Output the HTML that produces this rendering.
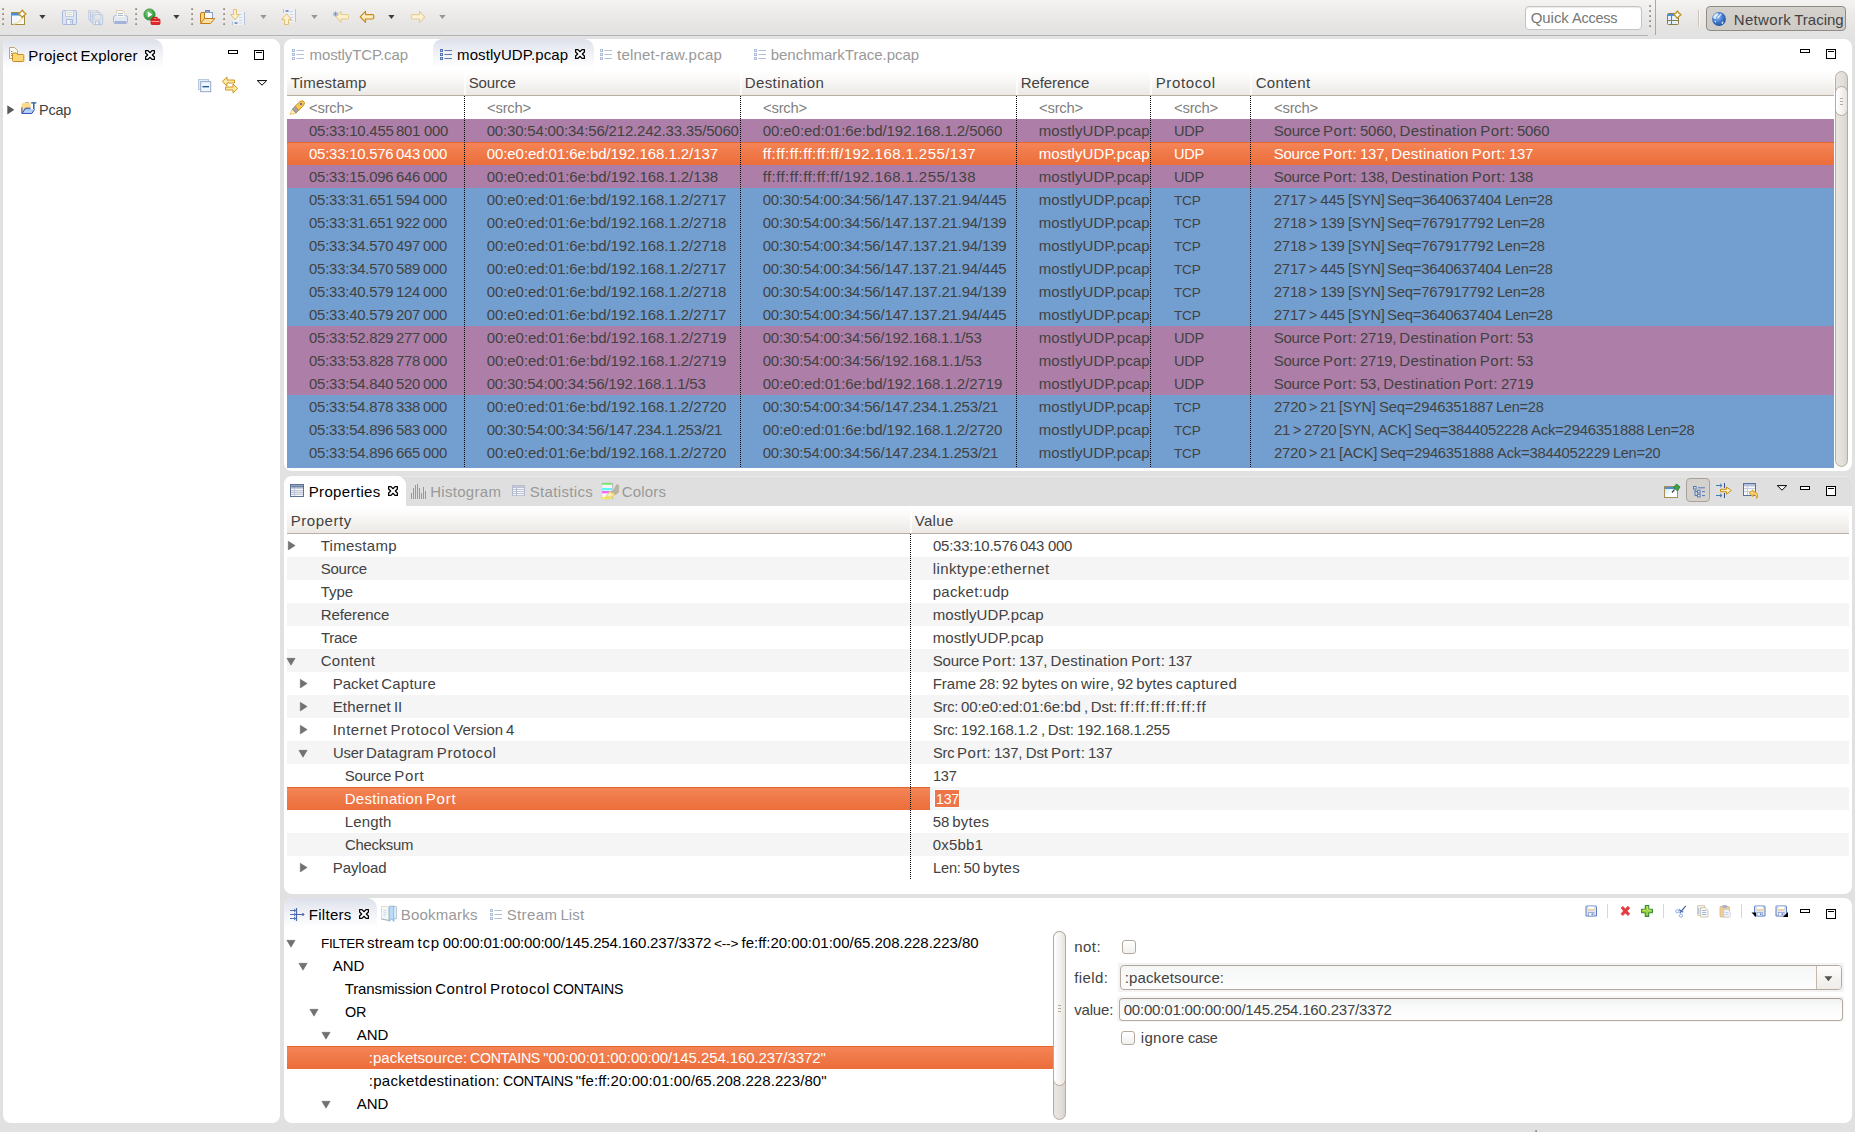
<!DOCTYPE html>
<html><head><meta charset="utf-8"><title>Network Tracing</title>
<style>
html,body{margin:0;padding:0}
body{width:1855px;height:1132px;overflow:hidden;background:#e1e1e1;font-family:"Liberation Sans", sans-serif;font-size:15px;position:relative}
div,span.t,svg{position:absolute;box-sizing:border-box}
span.t{white-space:pre;display:block}
span.w{position:absolute;top:0;white-space:pre;transform-origin:0 17px}
.panel{background:#fff;border-radius:8px}
.hdr{background:linear-gradient(#ffffff 0%,#fbfaf9 30%,#ece9e5 100%);border-bottom:1px solid #b9afa5}
.sel{background:linear-gradient(#e0672f 0,#e0672f 1px,#f58456 1px,#f07a4a 45%,#ec6e3a 100%)}
</style></head>
<body>
<div  style="left:0px;top:0px;width:1855px;height:39px;background:linear-gradient(#f4f3f1 0px,#ecebe9 14px,#e5e4e3 28px,#e3e3e3 35px,#e1e1e1 39px)"></div>
<div  style="left:0px;top:35px;width:1648px;height:1px;background:#b1b1b1"></div>
<div  style="left:0px;top:36px;width:1648px;height:1px;background:#e5e5e5"></div>
<div  style="left:1655px;top:0px;width:1px;height:35px;background:#aaa9a8"></div>
<div  style="left:1.5px;top:8px;width:2px;height:2px;background:linear-gradient(135deg,#c9c3b8,#857c68)"></div>
<div  style="left:1.5px;top:13px;width:2px;height:2px;background:linear-gradient(135deg,#c9c3b8,#857c68)"></div>
<div  style="left:1.5px;top:18px;width:2px;height:2px;background:linear-gradient(135deg,#c9c3b8,#857c68)"></div>
<div  style="left:1.5px;top:23px;width:2px;height:2px;background:linear-gradient(135deg,#c9c3b8,#857c68)"></div>
<svg style="left:10px;top:8px;" width="18" height="18" viewBox="0 0 18 18"><rect x="1.5" y="4.5" width="13" height="12" fill="#f3f8fd" stroke="#a58a3f"/><rect x="2" y="5" width="12" height="2.5" fill="#3e8fd8"/><path d="M3 16 Q11 15 13.5 7.5" stroke="#f4e3a7" stroke-width="1.6" fill="none"/><path d="M12.3 2.1999999999999997 Q13.65 4.449999999999999 15.9 5.8 Q13.65 7.15 12.3 9.4 Q10.950000000000001 7.15 8.700000000000001 5.8 Q10.950000000000001 4.449999999999999 12.3 2.1999999999999997 Z" fill="#fffdf0" stroke="#bf962a" stroke-width="1.5" stroke-linejoin="round"/><path d="M12.3 3.8 V7.8 M10.3 5.8 H14.3" stroke="#fff" stroke-width="1.2"/></svg>
<svg style="left:39px;top:15px;" width="7" height="5" viewBox="0 0 7 5"><path d="M0.3 0 L6.5 0 L3.4 4.1 Z" fill="#3c3c3c"/></svg>
<svg style="left:62px;top:10px;" width="16" height="16" viewBox="0 0 16 16"><g transform="translate(0,0) scale(1.0)" opacity="1.0"><path d="M1.5 0.5 H13.5 Q14.5 0.5 14.5 1.5 V13.5 Q14.5 14.5 13.5 14.5 H1.5 Q0.5 14.5 0.5 13.5 V1.5 Q0.5 0.5 1.5 0.5 Z" fill="#dde4ef" stroke="#a9bad8"/><rect x="3.5" y="0.5" width="8" height="6" fill="#f4f3ee" stroke="#c3cddf"/><path d="M5 2.5 H10 M5 4.5 H10" stroke="#d2d6dd" stroke-width="0.8"/><rect x="4.5" y="9.5" width="6" height="5" fill="#eef1f6" stroke="#a9bad8"/><rect x="8" y="10.5" width="1.5" height="3" fill="#b8c6df"/></g></svg>
<svg style="left:88px;top:10px;" width="16" height="16" viewBox="0 0 16 16"><g transform="translate(0,0) scale(0.7)" opacity="0.8"><path d="M1.5 0.5 H13.5 Q14.5 0.5 14.5 1.5 V13.5 Q14.5 14.5 13.5 14.5 H1.5 Q0.5 14.5 0.5 13.5 V1.5 Q0.5 0.5 1.5 0.5 Z" fill="#dde4ef" stroke="#a9bad8"/><rect x="3.5" y="0.5" width="8" height="6" fill="#f4f3ee" stroke="#c3cddf"/><path d="M5 2.5 H10 M5 4.5 H10" stroke="#d2d6dd" stroke-width="0.8"/><rect x="4.5" y="9.5" width="6" height="5" fill="#eef1f6" stroke="#a9bad8"/><rect x="8" y="10.5" width="1.5" height="3" fill="#b8c6df"/></g><g transform="translate(2.2,2.2) scale(0.7)" opacity="0.9"><path d="M1.5 0.5 H13.5 Q14.5 0.5 14.5 1.5 V13.5 Q14.5 14.5 13.5 14.5 H1.5 Q0.5 14.5 0.5 13.5 V1.5 Q0.5 0.5 1.5 0.5 Z" fill="#dde4ef" stroke="#a9bad8"/><rect x="3.5" y="0.5" width="8" height="6" fill="#f4f3ee" stroke="#c3cddf"/><path d="M5 2.5 H10 M5 4.5 H10" stroke="#d2d6dd" stroke-width="0.8"/><rect x="4.5" y="9.5" width="6" height="5" fill="#eef1f6" stroke="#a9bad8"/><rect x="8" y="10.5" width="1.5" height="3" fill="#b8c6df"/></g><g transform="translate(4.5,4.5) scale(0.7)" opacity="1.0"><path d="M1.5 0.5 H13.5 Q14.5 0.5 14.5 1.5 V13.5 Q14.5 14.5 13.5 14.5 H1.5 Q0.5 14.5 0.5 13.5 V1.5 Q0.5 0.5 1.5 0.5 Z" fill="#dde4ef" stroke="#a9bad8"/><rect x="3.5" y="0.5" width="8" height="6" fill="#f4f3ee" stroke="#c3cddf"/><path d="M5 2.5 H10 M5 4.5 H10" stroke="#d2d6dd" stroke-width="0.8"/><rect x="4.5" y="9.5" width="6" height="5" fill="#eef1f6" stroke="#a9bad8"/><rect x="8" y="10.5" width="1.5" height="3" fill="#b8c6df"/></g></svg>
<svg style="left:113px;top:10px;" width="16" height="16" viewBox="0 0 16 16"><path d="M3.5 6.5 V0.5 H9.5 L11.5 2.5 V6.5" fill="#fbf8ef" stroke="#dccfa8"/><rect x="0.5" y="5.5" width="14" height="8" rx="2" fill="#e3e9f3" stroke="#a9bad8"/><rect x="3.5" y="3" width="8" height="4" fill="#fbf8ef"/><path d="M5 3.5 H10 M5 5.5 H10" stroke="#a9bad8"/><rect x="1.5" y="11" width="12" height="3" rx="1" fill="#a3b4d6"/></svg>
<div  style="left:135px;top:8px;width:2px;height:2px;background:linear-gradient(135deg,#c9c3b8,#857c68)"></div>
<div  style="left:135px;top:13px;width:2px;height:2px;background:linear-gradient(135deg,#c9c3b8,#857c68)"></div>
<div  style="left:135px;top:18px;width:2px;height:2px;background:linear-gradient(135deg,#c9c3b8,#857c68)"></div>
<div  style="left:135px;top:23px;width:2px;height:2px;background:linear-gradient(135deg,#c9c3b8,#857c68)"></div>
<svg style="left:143px;top:8px;" width="18" height="18" viewBox="0 0 18 18"><defs><radialGradient id="gr" cx="40%" cy="35%" r="70%"><stop offset="0" stop-color="#7fd07a"/><stop offset="1" stop-color="#1d8a2c"/></radialGradient></defs><circle cx="6.5" cy="6.5" r="5.6" fill="url(#gr)" stroke="#2f8f3a" stroke-width="0.8"/><path d="M4.8 3.5 L9.6 6.5 L4.8 9.5 Z" fill="#fff"/><rect x="10" y="9.5" width="4" height="2.5" fill="none" stroke="#d91a1f" stroke-width="1.2"/><rect x="8" y="11" width="9" height="5.5" rx="1" fill="#e3262b" stroke="#c4161b" stroke-width="0.8"/><path d="M8.5 13.5 H16.5" stroke="#f7a9a9" stroke-width="0.9"/></svg>
<svg style="left:173px;top:15px;" width="7" height="5" viewBox="0 0 7 5"><path d="M0.3 0 L6.5 0 L3.4 4.1 Z" fill="#3c3c3c"/></svg>
<div  style="left:191px;top:8px;width:2px;height:2px;background:linear-gradient(135deg,#c9c3b8,#857c68)"></div>
<div  style="left:191px;top:13px;width:2px;height:2px;background:linear-gradient(135deg,#c9c3b8,#857c68)"></div>
<div  style="left:191px;top:18px;width:2px;height:2px;background:linear-gradient(135deg,#c9c3b8,#857c68)"></div>
<div  style="left:191px;top:23px;width:2px;height:2px;background:linear-gradient(135deg,#c9c3b8,#857c68)"></div>
<svg style="left:199px;top:9px;" width="18" height="16" viewBox="0 0 18 16"><rect x="6.5" y="1.5" width="4" height="2" fill="#8aa0c8" stroke="#6f86b4"/><rect x="5.5" y="3.5" width="8" height="6" fill="#f7f9fd" stroke="#8ea2c8"/><path d="M1.5 13.5 V5 Q1.5 3.5 3 3.5 H5.5 V9.5 H13.5" fill="#f7d48a" stroke="#c27c17"/><path d="M1.5 14.5 L5.5 9.5 H15.8 L11.5 14.5 Z" fill="#fbe0a1" stroke="#c27c17" stroke-linejoin="round"/></svg>
<div  style="left:222.5px;top:8px;width:2px;height:2px;background:linear-gradient(135deg,#c9c3b8,#857c68)"></div>
<div  style="left:222.5px;top:13px;width:2px;height:2px;background:linear-gradient(135deg,#c9c3b8,#857c68)"></div>
<div  style="left:222.5px;top:18px;width:2px;height:2px;background:linear-gradient(135deg,#c9c3b8,#857c68)"></div>
<div  style="left:222.5px;top:23px;width:2px;height:2px;background:linear-gradient(135deg,#c9c3b8,#857c68)"></div>
<svg style="left:230px;top:8px;" width="17" height="18" viewBox="0 0 17 18"><rect x="3" y="4" width="11.5" height="13" fill="#eef1f6"/><path d="M14.5 4 V17" stroke="#b6c4dd"/><path d="M2.5 13.5 V17" stroke="#b6c4dd"/><path d="M8 6.5 H12 M9 9.5 H12 M9 12.5 H12 M9 15 H12" stroke="#cfd8e8"/><rect x="4.5" y="14" width="3" height="2" fill="#7e9bd0"/><path d="M3.5 1.5 H6.5 V6.5 H9.3 L5 12 L0.7 6.5 H3.5 Z" fill="#fdf0cc" stroke="#e0c079" stroke-linejoin="round"/></svg>
<svg style="left:260px;top:15px;" width="7" height="5" viewBox="0 0 7 5"><path d="M0.3 0 L6.5 0 L3.4 4.1 Z" fill="#9d9389"/></svg>
<svg style="left:281px;top:8px;" width="17" height="18" viewBox="0 0 17 18"><rect x="3" y="1" width="11.5" height="13" fill="#eef1f6"/><path d="M14.5 1 V14" stroke="#b6c4dd"/><path d="M2.5 1 V5" stroke="#b6c4dd"/><path d="M8 3.5 H12 M9 6.5 H12 M9 9.5 H12 M9 12.5 H12" stroke="#cfd8e8"/><rect x="4.5" y="2" width="3" height="2" fill="#7e9bd0"/><path d="M3.5 16.5 H7.5 V11.5 H10.3 L5.5 5.5 L0.7 11.5 H3.5 Z" fill="#fdf0cc" stroke="#e0c079" stroke-linejoin="round"/></svg>
<svg style="left:311px;top:15px;" width="7" height="5" viewBox="0 0 7 5"><path d="M0.3 0 L6.5 0 L3.4 4.1 Z" fill="#9d9389"/></svg>
<svg style="left:332px;top:10px;" width="18" height="14" viewBox="0 0 18 14"><path d="M8.5 6.8 L13 2 V4.8 H16 Q17 4.8 17 5.8 V7.8 Q17 8.8 16 8.8 H13 V11.8 Z" transform="translate(21,0) scale(-1,1)" fill="none"/><path d="M4.2 6.8 L9 1.5 V4.6 H15.5 Q16.6 4.6 16.6 5.6 V8 Q16.6 9 15.5 9 H9 V12.2 Z" fill="#fdf0cc" stroke="#e3c88a" stroke-linejoin="round"/><path d="M3.5 1.5 V6.5 M1 4 H6 M1.7 2.2 L5.3 5.8 M5.3 2.2 L1.7 5.8" stroke="#6f8fc8" stroke-width="0.8"/></svg>
<svg style="left:359px;top:10px;" width="16" height="14" viewBox="0 0 16 14"><defs><linearGradient id="ba" x1="0" y1="0" x2="0" y2="1"><stop offset="0" stop-color="#fffdf5"/><stop offset="1" stop-color="#fbdc8b"/></linearGradient></defs><path d="M1.2 6.8 L6.5 1.3 V4.6 H13.5 Q14.7 4.6 14.7 5.8 V7.8 Q14.7 9 13.5 9 H6.5 V12.3 Z" fill="url(#ba)" stroke="#c58c18" stroke-width="1.2" stroke-linejoin="round"/></svg>
<svg style="left:388px;top:15px;" width="7" height="5" viewBox="0 0 7 5"><path d="M0.3 0 L6.5 0 L3.4 4.1 Z" fill="#3c3c3c"/></svg>
<svg style="left:410px;top:10px;" width="16" height="14" viewBox="0 0 16 14"><path d="M14.8 6.8 L9.5 1.3 V4.6 H2.5 Q1.3 4.6 1.3 5.8 V7.8 Q1.3 9 2.5 9 H9.5 V12.3 Z" fill="#fdf3d8" stroke="#e6cd95" stroke-width="1.1" stroke-linejoin="round"/></svg>
<svg style="left:439px;top:15px;" width="7" height="5" viewBox="0 0 7 5"><path d="M0.3 0 L6.5 0 L3.4 4.1 Z" fill="#9d9389"/></svg>
<div  style="left:1525px;top:6px;width:117px;height:24px;background:#fff;border:1px solid #c3c3c3;border-radius:4px;box-shadow:inset 0 1px 1px #e8e8e8"></div>
<span class="t" style="left:1530.7px;top:6px;color:#777;line-height:23px;height:23px;"><span class="w" style="left:0.00px;letter-spacing:-0.049px;">Quick</span> <span class="w" style="left:41.19px;transform:scale(0.9650);letter-spacing:-0.235px;">Access</span></span>
<div  style="left:1649px;top:5px;width:2px;height:2px;background:linear-gradient(135deg,#c9c3b8,#857c68)"></div>
<div  style="left:1649px;top:10px;width:2px;height:2px;background:linear-gradient(135deg,#c9c3b8,#857c68)"></div>
<div  style="left:1649px;top:15px;width:2px;height:2px;background:linear-gradient(135deg,#c9c3b8,#857c68)"></div>
<div  style="left:1649px;top:20px;width:2px;height:2px;background:linear-gradient(135deg,#c9c3b8,#857c68)"></div>
<div  style="left:1649px;top:25px;width:2px;height:2px;background:linear-gradient(135deg,#c9c3b8,#857c68)"></div>
<svg style="left:1666px;top:9px;" width="18" height="17" viewBox="0 0 18 17"><rect x="1.5" y="4.5" width="11" height="11" rx="1" fill="#e3f0fc" stroke="#8a7b4c"/><rect x="2" y="5" width="10" height="2" fill="#4b91da"/><path d="M5.5 7 V15 M2 11.5 H12.5" stroke="#8a7b4c" stroke-width="1"/><path d="M11.4 2.1 Q12.75 4.35 15.0 5.7 Q12.75 7.050000000000001 11.4 9.3 Q10.05 7.050000000000001 7.800000000000001 5.7 Q10.05 4.35 11.4 2.1 Z" fill="#fffdf0" stroke="#bf962a" stroke-width="1.5" stroke-linejoin="round"/><path d="M11.4 3.7 V7.7 M9.4 5.7 H13.4" stroke="#fff" stroke-width="1.2"/></svg>
<div  style="left:1698px;top:10px;width:1px;height:17px;background:#cdc3b9"></div>
<div  style="left:1699px;top:10px;width:1px;height:17px;background:#f6f5f4"></div>
<div  style="left:1706px;top:6px;width:140px;height:25px;background:linear-gradient(#d4d1cd,#cfccc8);border:1px solid #8f8b86;border-radius:4px"></div>
<svg style="left:1711px;top:11px;" width="16" height="16" viewBox="0 0 16 16"><defs><radialGradient id="gl" cx="40%" cy="35%" r="70%"><stop offset="0" stop-color="#9cc3f2"/><stop offset="0.55" stop-color="#3f78c8"/><stop offset="1" stop-color="#1f4f9e"/></radialGradient></defs><circle cx="8" cy="8" r="6.9" fill="url(#gl)"/><path d="M2.2 5.5 Q3.5 2.5 6 2 L7.8 3.2 L5.2 5.6 L4.6 8.2 L2.6 7.6 Z" fill="#eaf2fd" opacity="0.9"/><path d="M6.2 6.6 L9.8 2.4 L10.8 3 L7.4 7.4 Z" fill="#f4f8ff" opacity="0.85"/><path d="M3 9.5 L5.2 10.2 L4.6 12 Z M10.5 11 L12.6 10.6 L12 12.8 L10.8 13 Z" fill="#eef4fe" opacity="0.9"/></svg>
<span class="t" style="left:1733.7px;top:8px;color:#424242;line-height:23px;height:23px;"><span class="w" style="left:0.00px;letter-spacing:0.358px;">Network</span> <span class="w" style="left:60.55px;">Tracing</span></span>
<div class="panel" style="left:3px;top:39px;width:277px;height:1084px;"></div>
<div class="panel" style="left:284px;top:39px;width:1568px;height:432px;"></div>
<div class="panel" style="left:284px;top:476px;width:1568px;height:418px;overflow:hidden"></div>
<div class="panel" style="left:284px;top:898px;width:1568px;height:225px;"></div>
<div  style="left:1535px;top:1130px;width:2px;height:2px;background:linear-gradient(135deg,#c9c3b8,#857c68)"></div>
<div  style="left:3px;top:39px;width:160px;height:30px;background:linear-gradient(#dde0ea 0px,#e6e8f0 6px,#f4f5f9 18px,#ffffff 100%);border-radius:8px 10px 0 0"></div>
<svg style="left:8px;top:46px;" width="17" height="16" viewBox="0 0 17 16"><path d="M1.5 1.5 H6.5 L9.5 4.5 V12.5 H1.5 Z" fill="#fbf9f0" stroke="#b8a878"/><path d="M3 5.5 H4.5 M3 7.5 H4.5 M3 9.5 H4.5" stroke="#6f8cc8"/><path d="M5.5 15.5 Q4.5 15.5 4.5 14.5 V8 Q4.5 7 5.5 7 H8.3 L9.5 8.5 H14.8 Q15.8 8.5 15.8 9.5 V14.5 Q15.8 15.5 14.8 15.5 Z" fill="#fbd873" stroke="#c78a24"/></svg>
<span class="t" style="left:28.2px;top:44px;color:#000;line-height:23px;height:23px;"><span class="w" style="left:0.00px;letter-spacing:0.362px;">Project</span> <span class="w" style="left:52.24px;letter-spacing:0.175px;">Explorer</span></span>
<svg style="left:144px;top:49px;" width="12" height="12" viewBox="0 0 12 12"><path d="M1.6 1.6 H4 L6 3.7 L8 1.6 H10.4 V4 L8.3 6 L10.4 8 V10.4 H8 L6 8.3 L4 10.4 H1.6 V8 L3.7 6 L1.6 4 Z" fill="#fff" stroke="#000" stroke-width="1.25" stroke-linejoin="round"/></svg>
<div  style="left:228px;top:50px;width:10px;height:4px;border:1px solid #000;background:#fff"></div>
<div  style="left:254px;top:50px;width:10px;height:10px;border:1px solid #000;background:#fff"></div>
<div  style="left:256px;top:52px;width:6px;height:1px;background:#000"></div>
<svg style="left:198px;top:79px;" width="14" height="14" viewBox="0 0 14 14"><rect x="0.5" y="0.5" width="10" height="10" fill="#dcecf9" stroke="#b9c8df"/><rect x="2.7" y="2.7" width="10" height="10" fill="#eef7fd" stroke="#95a4c5"/><path d="M4.5 7.7 H11" stroke="#1b4f90" stroke-width="1.3"/></svg>
<svg style="left:221px;top:76px;" width="18" height="18" viewBox="0 0 18 18"><path d="M1.2 5.5 L6 1 V4 H13.5 V7 H6 V10 Z" fill="#fde9a3" stroke="#c98d13" stroke-width="0.9" stroke-linejoin="round"/><path d="M16.8 12.5 L12 8 V11 H4.5 V14 H12 V17 Z" fill="#fde9a3" stroke="#c98d13" stroke-width="0.9" stroke-linejoin="round"/></svg>
<svg style="left:256px;top:80px;" width="12" height="7" viewBox="0 0 12 7"><path d="M1.3 0.6 H10.7 L6 5.2 Z" fill="#fff" stroke="#000" stroke-width="1"/></svg>
<svg style="left:7px;top:105px;" width="8" height="10" viewBox="0 0 8 10"><path d="M0.3 0.2 L7.3 4.8 L0.3 9.4 Z" fill="#595959"/></svg>
<svg style="left:21px;top:102px;" width="16" height="13" viewBox="0 0 16 13"><defs><linearGradient id="pf" x1="0" y1="0" x2="0" y2="1"><stop offset="0" stop-color="#8fbaf0"/><stop offset="1" stop-color="#c9e0fa"/></linearGradient></defs><path d="M1 11 V2.4 Q1 1.4 2 1.4 H3.2 L4.3 0.4 H7.6 L8.7 1.4 H10.2 V6" fill="#fcdb88" stroke="#f0cf84" stroke-width="0.6"/><path d="M4.3 0.5 H7.6" stroke="#a3abbd" stroke-width="1"/><path d="M1.2 11.4 L4.4 6.2 H14.4 L10.9 11.4 Z" fill="url(#pf)" stroke="#3142b4" stroke-width="1" stroke-linejoin="round"/><path d="M0.9 5.5 V11.6" stroke="#3142b4" stroke-width="1"/><rect x="9.6" y="0" width="6.4" height="7.4" fill="#fff"/><path d="M10.2 0.9 H15.4 M12.8 0.9 V7" stroke="#1d5a9a" stroke-width="1.4"/></svg>
<span class="t" style="left:39.0px;top:98px;color:#424242;line-height:23px;height:23px;"><span class="w" style="left:0.00px;transform:scale(0.9637);letter-spacing:-0.249px;">Pcap</span></span>
<div  style="left:433px;top:39px;width:161px;height:29px;background:linear-gradient(#dde0ea 0px,#e6e8f0 6px,#f4f5f9 18px,#ffffff 100%);border-radius:9px 10px 0 0"></div>
<svg style="left:292px;top:49px;" width="12" height="11" viewBox="0 0 12 11"><g opacity="0.45"><rect x="0" y="0" width="3" height="3" fill="#4c6aa8"/><rect x="0" y="4" width="3" height="3" fill="#4c6aa8"/><rect x="0" y="8" width="3" height="3" fill="#4c6aa8"/><rect x="0.9" y="0.9" width="1.2" height="1.2" fill="#dfe6f3"/><rect x="0.9" y="4.9" width="1.2" height="1.2" fill="#dfe6f3"/><rect x="0.9" y="8.9" width="1.2" height="1.2" fill="#dfe6f3"/><path d="M4.5 1.5 H12 M4.5 5.5 H12 M4.5 9.5 H12" stroke="#5d78b0" stroke-width="1"/></g></svg>
<span class="t" style="left:309.5px;top:43px;color:#999999;line-height:23px;height:23px;"><span class="w" style="left:0.00px;letter-spacing:-0.097px;">mostlyTCP.cap</span></span>
<svg style="left:440px;top:49px;" width="12" height="11" viewBox="0 0 12 11"><g opacity="1.0"><rect x="0" y="0" width="3" height="3" fill="#4c6aa8"/><rect x="0" y="4" width="3" height="3" fill="#4c6aa8"/><rect x="0" y="8" width="3" height="3" fill="#4c6aa8"/><rect x="0.9" y="0.9" width="1.2" height="1.2" fill="#dfe6f3"/><rect x="0.9" y="4.9" width="1.2" height="1.2" fill="#dfe6f3"/><rect x="0.9" y="8.9" width="1.2" height="1.2" fill="#dfe6f3"/><path d="M4.5 1.5 H12 M4.5 5.5 H12 M4.5 9.5 H12" stroke="#5d78b0" stroke-width="1"/></g></svg>
<span class="t" style="left:457.1px;top:43px;color:#000;line-height:23px;height:23px;"><span class="w" style="left:0.00px;letter-spacing:0.087px;">mostlyUDP.pcap</span></span>
<svg style="left:574px;top:48.3px;" width="12" height="12" viewBox="0 0 12 12"><path d="M1.6 1.6 H4 L6 3.7 L8 1.6 H10.4 V4 L8.3 6 L10.4 8 V10.4 H8 L6 8.3 L4 10.4 H1.6 V8 L3.7 6 L1.6 4 Z" fill="#fff" stroke="#000" stroke-width="1.25" stroke-linejoin="round"/></svg>
<svg style="left:600px;top:49px;" width="12" height="11" viewBox="0 0 12 11"><g opacity="0.45"><rect x="0" y="0" width="3" height="3" fill="#4c6aa8"/><rect x="0" y="4" width="3" height="3" fill="#4c6aa8"/><rect x="0" y="8" width="3" height="3" fill="#4c6aa8"/><rect x="0.9" y="0.9" width="1.2" height="1.2" fill="#dfe6f3"/><rect x="0.9" y="4.9" width="1.2" height="1.2" fill="#dfe6f3"/><rect x="0.9" y="8.9" width="1.2" height="1.2" fill="#dfe6f3"/><path d="M4.5 1.5 H12 M4.5 5.5 H12 M4.5 9.5 H12" stroke="#5d78b0" stroke-width="1"/></g></svg>
<span class="t" style="left:617.0px;top:43px;color:#999999;line-height:23px;height:23px;"><span class="w" style="left:0.00px;letter-spacing:0.218px;">telnet-raw.pcap</span></span>
<svg style="left:754px;top:49px;" width="12" height="11" viewBox="0 0 12 11"><g opacity="0.45"><rect x="0" y="0" width="3" height="3" fill="#4c6aa8"/><rect x="0" y="4" width="3" height="3" fill="#4c6aa8"/><rect x="0" y="8" width="3" height="3" fill="#4c6aa8"/><rect x="0.9" y="0.9" width="1.2" height="1.2" fill="#dfe6f3"/><rect x="0.9" y="4.9" width="1.2" height="1.2" fill="#dfe6f3"/><rect x="0.9" y="8.9" width="1.2" height="1.2" fill="#dfe6f3"/><path d="M4.5 1.5 H12 M4.5 5.5 H12 M4.5 9.5 H12" stroke="#5d78b0" stroke-width="1"/></g></svg>
<span class="t" style="left:770.7px;top:43px;color:#999999;line-height:23px;height:23px;"><span class="w" style="left:0.00px;letter-spacing:-0.010px;">benchmarkTrace.pcap</span></span>
<svg style="left:289px;top:100px;" width="17" height="16" viewBox="0 0 17 16"><path d="M1 14.5 L3.2 9.5 L7 13 Z" fill="#fdf2c0" stroke="#e5b84a" stroke-width="0.8"/><path d="M3.5 9.2 L6 6.5 L9.7 10.2 L7.2 12.8 Z" fill="#a9a5a8" stroke="#6e6a6e" stroke-width="0.8"/><path d="M6 6.3 L11.2 1.3 L14 0.8 L15.5 2.6 L14.8 5.2 L9.9 10.3 Z" fill="#f8c657" stroke="#c98814" stroke-width="0.9" stroke-linejoin="round"/><circle cx="12" cy="4" r="1.1" fill="#3b5ea8"/></svg>
<div class="hdr" style="left:287px;top:71px;width:1547px;height:25px;"></div>
<span class="t" style="left:290.7px;top:71px;color:#424242;line-height:23px;height:23px;"><span class="w" style="left:0.00px;letter-spacing:0.264px;">Timestamp</span></span>
<span class="t" style="left:468.7px;top:71px;color:#424242;line-height:23px;height:23px;"><span class="w" style="left:0.00px;letter-spacing:-0.089px;">Source</span></span>
<div  style="left:464px;top:71px;width:2px;height:24px;background:rgba(255,255,255,0.72)"></div>
<span class="t" style="left:744.7px;top:71px;color:#424242;line-height:23px;height:23px;"><span class="w" style="left:0.00px;letter-spacing:0.405px;">Destination</span></span>
<div  style="left:740px;top:71px;width:2px;height:24px;background:rgba(255,255,255,0.72)"></div>
<span class="t" style="left:1020.7px;top:71px;color:#424242;line-height:23px;height:23px;"><span class="w" style="left:0.00px;letter-spacing:-0.080px;">Reference</span></span>
<div  style="left:1016px;top:71px;width:2px;height:24px;background:rgba(255,255,255,0.72)"></div>
<span class="t" style="left:1155.7px;top:71px;color:#424242;line-height:23px;height:23px;"><span class="w" style="left:0.00px;letter-spacing:0.621px;">Protocol</span></span>
<div  style="left:1150px;top:71px;width:2px;height:24px;background:rgba(255,255,255,0.72)"></div>
<span class="t" style="left:1255.7px;top:71px;color:#424242;line-height:23px;height:23px;"><span class="w" style="left:0.00px;letter-spacing:0.308px;">Content</span></span>
<div  style="left:1250px;top:71px;width:2px;height:24px;background:rgba(255,255,255,0.72)"></div>
<span class="t" style="left:308.7px;top:96px;color:#7f7f7f;line-height:23px;height:23px;"><span class="w" style="left:0.00px;transform:scale(0.9882);letter-spacing:-0.223px;">&lt;srch&gt;</span></span>
<span class="t" style="left:486.7px;top:96px;color:#7f7f7f;line-height:23px;height:23px;"><span class="w" style="left:0.00px;transform:scale(0.9882);letter-spacing:-0.223px;">&lt;srch&gt;</span></span>
<span class="t" style="left:762.7px;top:96px;color:#7f7f7f;line-height:23px;height:23px;"><span class="w" style="left:0.00px;transform:scale(0.9882);letter-spacing:-0.223px;">&lt;srch&gt;</span></span>
<span class="t" style="left:1038.7px;top:96px;color:#7f7f7f;line-height:23px;height:23px;"><span class="w" style="left:0.00px;transform:scale(0.9882);letter-spacing:-0.223px;">&lt;srch&gt;</span></span>
<span class="t" style="left:1173.7px;top:96px;color:#7f7f7f;line-height:23px;height:23px;"><span class="w" style="left:0.00px;transform:scale(0.9882);letter-spacing:-0.223px;">&lt;srch&gt;</span></span>
<span class="t" style="left:1273.7px;top:96px;color:#7f7f7f;line-height:23px;height:23px;"><span class="w" style="left:0.00px;transform:scale(0.9882);letter-spacing:-0.223px;">&lt;srch&gt;</span></span>
<div  style="left:287px;top:119px;width:1547px;height:23px;background:#ad7fa8"></div>
<span class="t" style="left:308.7px;top:119px;color:#424242;line-height:23px;height:23px;"><span class="w" style="left:0.00px;transform:scale(0.9949);letter-spacing:-0.213px;">05:33:10.455</span> <span class="w" style="left:87.63px;transform:scale(0.9947);letter-spacing:-0.243px;">801</span> <span class="w" style="left:114.83px;transform:scale(0.9947);letter-spacing:-0.243px;">000</span></span>
<span class="t" style="left:486.7px;top:119px;color:#424242;line-height:23px;height:23px;"><span class="w" style="left:0.00px;letter-spacing:-0.180px;">00:30:54:00:34:56/212.242.33.35/5060</span></span>
<span class="t" style="left:762.7px;top:119px;color:#424242;line-height:23px;height:23px;"><span class="w" style="left:0.00px;letter-spacing:-0.067px;">00:e0:ed:01:6e:bd/192.168.1.2/5060</span></span>
<span class="t" style="left:1038.7px;top:119px;color:#424242;line-height:23px;height:23px;"><span class="w" style="left:0.00px;letter-spacing:0.087px;">mostlyUDP.pcap</span></span>
<span class="t" style="left:1173.7px;top:119px;color:#424242;line-height:23px;height:23px;"><span class="w" style="left:0.00px;transform:scale(0.9691);letter-spacing:-0.307px;">UDP</span></span>
<span class="t" style="left:1273.7px;top:119px;color:#424242;line-height:23px;height:23px;"><span class="w" style="left:0.00px;letter-spacing:-0.199px;">Source</span> <span class="w" style="left:49.36px;letter-spacing:0.512px;">Port:</span> <span class="w" style="left:86.63px;transform:scale(0.9948);letter-spacing:-0.219px;">5060,</span> <span class="w" style="left:125.91px;letter-spacing:0.229px;">Destination</span> <span class="w" style="left:206.50px;letter-spacing:0.512px;">Port:</span> <span class="w" style="left:243.77px;transform:scale(0.9948);letter-spacing:-0.243px;">5060</span></span>
<div class="sel" style="left:287px;top:142px;width:1547px;height:23px;"></div>
<span class="t" style="left:308.7px;top:142px;color:#ffffff;line-height:23px;height:23px;"><span class="w" style="left:0.00px;transform:scale(0.9927);letter-spacing:-0.213px;">05:33:10.576</span> <span class="w" style="left:87.43px;transform:scale(0.9925);letter-spacing:-0.243px;">043</span> <span class="w" style="left:114.57px;transform:scale(0.9925);letter-spacing:-0.243px;">000</span></span>
<span class="t" style="left:486.7px;top:142px;color:#ffffff;line-height:23px;height:23px;"><span class="w" style="left:0.00px;letter-spacing:-0.069px;">00:e0:ed:01:6e:bd/192.168.1.2/137</span></span>
<span class="t" style="left:762.7px;top:142px;color:#ffffff;line-height:23px;height:23px;"><span class="w" style="left:0.00px;letter-spacing:0.425px;">ff:ff:ff:ff:ff:ff/192.168.1.255/137</span></span>
<span class="t" style="left:1038.7px;top:142px;color:#ffffff;line-height:23px;height:23px;"><span class="w" style="left:0.00px;letter-spacing:0.087px;">mostlyUDP.pcap</span></span>
<span class="t" style="left:1173.7px;top:142px;color:#ffffff;line-height:23px;height:23px;"><span class="w" style="left:0.00px;transform:scale(0.9691);letter-spacing:-0.307px;">UDP</span></span>
<span class="t" style="left:1273.7px;top:142px;color:#ffffff;line-height:23px;height:23px;"><span class="w" style="left:0.00px;letter-spacing:-0.217px;">Source</span> <span class="w" style="left:49.25px;letter-spacing:0.497px;">Port:</span> <span class="w" style="left:86.43px;transform:scale(0.9925);letter-spacing:-0.213px;">137,</span> <span class="w" style="left:117.59px;letter-spacing:0.213px;">Destination</span> <span class="w" style="left:197.99px;letter-spacing:0.497px;">Port:</span> <span class="w" style="left:235.18px;transform:scale(0.9925);letter-spacing:-0.243px;">137</span></span>
<div  style="left:287px;top:165px;width:1547px;height:23px;background:#ad7fa8"></div>
<span class="t" style="left:308.7px;top:165px;color:#424242;line-height:23px;height:23px;"><span class="w" style="left:0.00px;transform:scale(0.9927);letter-spacing:-0.213px;">05:33:15.096</span> <span class="w" style="left:87.43px;transform:scale(0.9925);letter-spacing:-0.243px;">646</span> <span class="w" style="left:114.57px;transform:scale(0.9925);letter-spacing:-0.243px;">000</span></span>
<span class="t" style="left:486.7px;top:165px;color:#424242;line-height:23px;height:23px;"><span class="w" style="left:0.00px;letter-spacing:-0.069px;">00:e0:ed:01:6e:bd/192.168.1.2/138</span></span>
<span class="t" style="left:762.7px;top:165px;color:#424242;line-height:23px;height:23px;"><span class="w" style="left:0.00px;letter-spacing:0.425px;">ff:ff:ff:ff:ff:ff/192.168.1.255/138</span></span>
<span class="t" style="left:1038.7px;top:165px;color:#424242;line-height:23px;height:23px;"><span class="w" style="left:0.00px;letter-spacing:0.087px;">mostlyUDP.pcap</span></span>
<span class="t" style="left:1173.7px;top:165px;color:#424242;line-height:23px;height:23px;"><span class="w" style="left:0.00px;transform:scale(0.9691);letter-spacing:-0.307px;">UDP</span></span>
<span class="t" style="left:1273.7px;top:165px;color:#424242;line-height:23px;height:23px;"><span class="w" style="left:0.00px;letter-spacing:-0.217px;">Source</span> <span class="w" style="left:49.25px;letter-spacing:0.497px;">Port:</span> <span class="w" style="left:86.43px;transform:scale(0.9925);letter-spacing:-0.213px;">138,</span> <span class="w" style="left:117.59px;letter-spacing:0.213px;">Destination</span> <span class="w" style="left:197.99px;letter-spacing:0.497px;">Port:</span> <span class="w" style="left:235.18px;transform:scale(0.9925);letter-spacing:-0.243px;">138</span></span>
<div  style="left:287px;top:188px;width:1547px;height:23px;background:#729fcf"></div>
<span class="t" style="left:308.7px;top:188px;color:#424242;line-height:23px;height:23px;"><span class="w" style="left:0.00px;transform:scale(0.9927);letter-spacing:-0.213px;">05:33:31.651</span> <span class="w" style="left:87.43px;transform:scale(0.9925);letter-spacing:-0.243px;">594</span> <span class="w" style="left:114.57px;transform:scale(0.9925);letter-spacing:-0.243px;">000</span></span>
<span class="t" style="left:486.7px;top:188px;color:#424242;line-height:23px;height:23px;"><span class="w" style="left:0.00px;letter-spacing:-0.067px;">00:e0:ed:01:6e:bd/192.168.1.2/2717</span></span>
<span class="t" style="left:762.7px;top:188px;color:#424242;line-height:23px;height:23px;"><span class="w" style="left:0.00px;letter-spacing:-0.184px;">00:30:54:00:34:56/147.137.21.94/445</span></span>
<span class="t" style="left:1038.7px;top:188px;color:#424242;line-height:23px;height:23px;"><span class="w" style="left:0.00px;letter-spacing:0.087px;">mostlyUDP.pcap</span></span>
<span class="t" style="left:1173.7px;top:188px;color:#424242;line-height:23px;height:23px;"><span class="w" style="left:0.00px;transform:scale(0.9098);letter-spacing:-0.291px;">TCP</span></span>
<span class="t" style="left:1273.7px;top:188px;color:#424242;line-height:23px;height:23px;"><span class="w" style="left:0.00px;letter-spacing:-0.239px;">2717</span> <span class="w" style="left:35.46px;transform:scale(0.9523);letter-spacing:-0.255px;">&gt;</span> <span class="w" style="left:46.60px;letter-spacing:-0.239px;">445</span> <span class="w" style="left:73.96px;transform:scale(0.9586);letter-spacing:-0.228px;">[SYN]</span> <span class="w" style="left:113.47px;transform:scale(0.9919);letter-spacing:-0.247px;">Seq=3640637404</span> <span class="w" style="left:230.98px;transform:scale(0.9715);letter-spacing:-0.245px;">Len=28</span></span>
<div  style="left:287px;top:211px;width:1547px;height:23px;background:#729fcf"></div>
<span class="t" style="left:308.7px;top:211px;color:#424242;line-height:23px;height:23px;"><span class="w" style="left:0.00px;transform:scale(0.9927);letter-spacing:-0.213px;">05:33:31.651</span> <span class="w" style="left:87.43px;transform:scale(0.9925);letter-spacing:-0.243px;">922</span> <span class="w" style="left:114.57px;transform:scale(0.9925);letter-spacing:-0.243px;">000</span></span>
<span class="t" style="left:486.7px;top:211px;color:#424242;line-height:23px;height:23px;"><span class="w" style="left:0.00px;letter-spacing:-0.067px;">00:e0:ed:01:6e:bd/192.168.1.2/2718</span></span>
<span class="t" style="left:762.7px;top:211px;color:#424242;line-height:23px;height:23px;"><span class="w" style="left:0.00px;letter-spacing:-0.184px;">00:30:54:00:34:56/147.137.21.94/139</span></span>
<span class="t" style="left:1038.7px;top:211px;color:#424242;line-height:23px;height:23px;"><span class="w" style="left:0.00px;letter-spacing:0.087px;">mostlyUDP.pcap</span></span>
<span class="t" style="left:1173.7px;top:211px;color:#424242;line-height:23px;height:23px;"><span class="w" style="left:0.00px;transform:scale(0.9098);letter-spacing:-0.291px;">TCP</span></span>
<span class="t" style="left:1273.7px;top:211px;color:#424242;line-height:23px;height:23px;"><span class="w" style="left:0.00px;letter-spacing:-0.236px;">2718</span> <span class="w" style="left:35.47px;transform:scale(0.9527);letter-spacing:-0.255px;">&gt;</span> <span class="w" style="left:46.62px;letter-spacing:-0.236px;">139</span> <span class="w" style="left:73.98px;transform:scale(0.9590);letter-spacing:-0.228px;">[SYN]</span> <span class="w" style="left:113.51px;transform:scale(0.9916);letter-spacing:-0.248px;">Seq=767917792</span> <span class="w" style="left:222.97px;transform:scale(0.9718);letter-spacing:-0.245px;">Len=28</span></span>
<div  style="left:287px;top:234px;width:1547px;height:23px;background:#729fcf"></div>
<span class="t" style="left:308.7px;top:234px;color:#424242;line-height:23px;height:23px;"><span class="w" style="left:0.00px;transform:scale(0.9927);letter-spacing:-0.213px;">05:33:34.570</span> <span class="w" style="left:87.43px;transform:scale(0.9925);letter-spacing:-0.243px;">497</span> <span class="w" style="left:114.57px;transform:scale(0.9925);letter-spacing:-0.243px;">000</span></span>
<span class="t" style="left:486.7px;top:234px;color:#424242;line-height:23px;height:23px;"><span class="w" style="left:0.00px;letter-spacing:-0.067px;">00:e0:ed:01:6e:bd/192.168.1.2/2718</span></span>
<span class="t" style="left:762.7px;top:234px;color:#424242;line-height:23px;height:23px;"><span class="w" style="left:0.00px;letter-spacing:-0.184px;">00:30:54:00:34:56/147.137.21.94/139</span></span>
<span class="t" style="left:1038.7px;top:234px;color:#424242;line-height:23px;height:23px;"><span class="w" style="left:0.00px;letter-spacing:0.087px;">mostlyUDP.pcap</span></span>
<span class="t" style="left:1173.7px;top:234px;color:#424242;line-height:23px;height:23px;"><span class="w" style="left:0.00px;transform:scale(0.9098);letter-spacing:-0.291px;">TCP</span></span>
<span class="t" style="left:1273.7px;top:234px;color:#424242;line-height:23px;height:23px;"><span class="w" style="left:0.00px;letter-spacing:-0.236px;">2718</span> <span class="w" style="left:35.47px;transform:scale(0.9527);letter-spacing:-0.255px;">&gt;</span> <span class="w" style="left:46.62px;letter-spacing:-0.236px;">139</span> <span class="w" style="left:73.98px;transform:scale(0.9590);letter-spacing:-0.228px;">[SYN]</span> <span class="w" style="left:113.51px;transform:scale(0.9916);letter-spacing:-0.248px;">Seq=767917792</span> <span class="w" style="left:222.97px;transform:scale(0.9718);letter-spacing:-0.245px;">Len=28</span></span>
<div  style="left:287px;top:257px;width:1547px;height:23px;background:#729fcf"></div>
<span class="t" style="left:308.7px;top:257px;color:#424242;line-height:23px;height:23px;"><span class="w" style="left:0.00px;transform:scale(0.9927);letter-spacing:-0.213px;">05:33:34.570</span> <span class="w" style="left:87.43px;transform:scale(0.9925);letter-spacing:-0.243px;">589</span> <span class="w" style="left:114.57px;transform:scale(0.9925);letter-spacing:-0.243px;">000</span></span>
<span class="t" style="left:486.7px;top:257px;color:#424242;line-height:23px;height:23px;"><span class="w" style="left:0.00px;letter-spacing:-0.067px;">00:e0:ed:01:6e:bd/192.168.1.2/2717</span></span>
<span class="t" style="left:762.7px;top:257px;color:#424242;line-height:23px;height:23px;"><span class="w" style="left:0.00px;letter-spacing:-0.184px;">00:30:54:00:34:56/147.137.21.94/445</span></span>
<span class="t" style="left:1038.7px;top:257px;color:#424242;line-height:23px;height:23px;"><span class="w" style="left:0.00px;letter-spacing:0.087px;">mostlyUDP.pcap</span></span>
<span class="t" style="left:1173.7px;top:257px;color:#424242;line-height:23px;height:23px;"><span class="w" style="left:0.00px;transform:scale(0.9098);letter-spacing:-0.291px;">TCP</span></span>
<span class="t" style="left:1273.7px;top:257px;color:#424242;line-height:23px;height:23px;"><span class="w" style="left:0.00px;letter-spacing:-0.239px;">2717</span> <span class="w" style="left:35.46px;transform:scale(0.9523);letter-spacing:-0.255px;">&gt;</span> <span class="w" style="left:46.60px;letter-spacing:-0.239px;">445</span> <span class="w" style="left:73.96px;transform:scale(0.9586);letter-spacing:-0.228px;">[SYN]</span> <span class="w" style="left:113.47px;transform:scale(0.9919);letter-spacing:-0.247px;">Seq=3640637404</span> <span class="w" style="left:230.98px;transform:scale(0.9715);letter-spacing:-0.245px;">Len=28</span></span>
<div  style="left:287px;top:280px;width:1547px;height:23px;background:#729fcf"></div>
<span class="t" style="left:308.7px;top:280px;color:#424242;line-height:23px;height:23px;"><span class="w" style="left:0.00px;transform:scale(0.9927);letter-spacing:-0.213px;">05:33:40.579</span> <span class="w" style="left:87.43px;transform:scale(0.9925);letter-spacing:-0.243px;">124</span> <span class="w" style="left:114.57px;transform:scale(0.9925);letter-spacing:-0.243px;">000</span></span>
<span class="t" style="left:486.7px;top:280px;color:#424242;line-height:23px;height:23px;"><span class="w" style="left:0.00px;letter-spacing:-0.067px;">00:e0:ed:01:6e:bd/192.168.1.2/2718</span></span>
<span class="t" style="left:762.7px;top:280px;color:#424242;line-height:23px;height:23px;"><span class="w" style="left:0.00px;letter-spacing:-0.184px;">00:30:54:00:34:56/147.137.21.94/139</span></span>
<span class="t" style="left:1038.7px;top:280px;color:#424242;line-height:23px;height:23px;"><span class="w" style="left:0.00px;letter-spacing:0.087px;">mostlyUDP.pcap</span></span>
<span class="t" style="left:1173.7px;top:280px;color:#424242;line-height:23px;height:23px;"><span class="w" style="left:0.00px;transform:scale(0.9098);letter-spacing:-0.291px;">TCP</span></span>
<span class="t" style="left:1273.7px;top:280px;color:#424242;line-height:23px;height:23px;"><span class="w" style="left:0.00px;letter-spacing:-0.236px;">2718</span> <span class="w" style="left:35.47px;transform:scale(0.9527);letter-spacing:-0.255px;">&gt;</span> <span class="w" style="left:46.62px;letter-spacing:-0.236px;">139</span> <span class="w" style="left:73.98px;transform:scale(0.9590);letter-spacing:-0.228px;">[SYN]</span> <span class="w" style="left:113.51px;transform:scale(0.9916);letter-spacing:-0.248px;">Seq=767917792</span> <span class="w" style="left:222.97px;transform:scale(0.9718);letter-spacing:-0.245px;">Len=28</span></span>
<div  style="left:287px;top:303px;width:1547px;height:23px;background:#729fcf"></div>
<span class="t" style="left:308.7px;top:303px;color:#424242;line-height:23px;height:23px;"><span class="w" style="left:0.00px;transform:scale(0.9927);letter-spacing:-0.213px;">05:33:40.579</span> <span class="w" style="left:87.43px;transform:scale(0.9925);letter-spacing:-0.243px;">207</span> <span class="w" style="left:114.57px;transform:scale(0.9925);letter-spacing:-0.243px;">000</span></span>
<span class="t" style="left:486.7px;top:303px;color:#424242;line-height:23px;height:23px;"><span class="w" style="left:0.00px;letter-spacing:-0.067px;">00:e0:ed:01:6e:bd/192.168.1.2/2717</span></span>
<span class="t" style="left:762.7px;top:303px;color:#424242;line-height:23px;height:23px;"><span class="w" style="left:0.00px;letter-spacing:-0.184px;">00:30:54:00:34:56/147.137.21.94/445</span></span>
<span class="t" style="left:1038.7px;top:303px;color:#424242;line-height:23px;height:23px;"><span class="w" style="left:0.00px;letter-spacing:0.087px;">mostlyUDP.pcap</span></span>
<span class="t" style="left:1173.7px;top:303px;color:#424242;line-height:23px;height:23px;"><span class="w" style="left:0.00px;transform:scale(0.9098);letter-spacing:-0.291px;">TCP</span></span>
<span class="t" style="left:1273.7px;top:303px;color:#424242;line-height:23px;height:23px;"><span class="w" style="left:0.00px;letter-spacing:-0.239px;">2717</span> <span class="w" style="left:35.46px;transform:scale(0.9523);letter-spacing:-0.255px;">&gt;</span> <span class="w" style="left:46.60px;letter-spacing:-0.239px;">445</span> <span class="w" style="left:73.96px;transform:scale(0.9586);letter-spacing:-0.228px;">[SYN]</span> <span class="w" style="left:113.47px;transform:scale(0.9919);letter-spacing:-0.247px;">Seq=3640637404</span> <span class="w" style="left:230.98px;transform:scale(0.9715);letter-spacing:-0.245px;">Len=28</span></span>
<div  style="left:287px;top:326px;width:1547px;height:23px;background:#ad7fa8"></div>
<span class="t" style="left:308.7px;top:326px;color:#424242;line-height:23px;height:23px;"><span class="w" style="left:0.00px;transform:scale(0.9927);letter-spacing:-0.213px;">05:33:52.829</span> <span class="w" style="left:87.43px;transform:scale(0.9925);letter-spacing:-0.243px;">277</span> <span class="w" style="left:114.57px;transform:scale(0.9925);letter-spacing:-0.243px;">000</span></span>
<span class="t" style="left:486.7px;top:326px;color:#424242;line-height:23px;height:23px;"><span class="w" style="left:0.00px;letter-spacing:-0.067px;">00:e0:ed:01:6e:bd/192.168.1.2/2719</span></span>
<span class="t" style="left:762.7px;top:326px;color:#424242;line-height:23px;height:23px;"><span class="w" style="left:0.00px;letter-spacing:-0.197px;">00:30:54:00:34:56/192.168.1.1/53</span></span>
<span class="t" style="left:1038.7px;top:326px;color:#424242;line-height:23px;height:23px;"><span class="w" style="left:0.00px;letter-spacing:0.087px;">mostlyUDP.pcap</span></span>
<span class="t" style="left:1173.7px;top:326px;color:#424242;line-height:23px;height:23px;"><span class="w" style="left:0.00px;transform:scale(0.9691);letter-spacing:-0.307px;">UDP</span></span>
<span class="t" style="left:1273.7px;top:326px;color:#424242;line-height:23px;height:23px;"><span class="w" style="left:0.00px;letter-spacing:-0.214px;">Source</span> <span class="w" style="left:49.27px;letter-spacing:0.499px;">Port:</span> <span class="w" style="left:86.47px;transform:scale(0.9929);letter-spacing:-0.219px;">2719,</span> <span class="w" style="left:125.68px;letter-spacing:0.216px;">Destination</span> <span class="w" style="left:206.11px;letter-spacing:0.499px;">Port:</span> <span class="w" style="left:243.31px;transform:scale(0.9929);letter-spacing:-0.243px;">53</span></span>
<div  style="left:287px;top:349px;width:1547px;height:23px;background:#ad7fa8"></div>
<span class="t" style="left:308.7px;top:349px;color:#424242;line-height:23px;height:23px;"><span class="w" style="left:0.00px;transform:scale(0.9927);letter-spacing:-0.213px;">05:33:53.828</span> <span class="w" style="left:87.43px;transform:scale(0.9925);letter-spacing:-0.243px;">778</span> <span class="w" style="left:114.57px;transform:scale(0.9925);letter-spacing:-0.243px;">000</span></span>
<span class="t" style="left:486.7px;top:349px;color:#424242;line-height:23px;height:23px;"><span class="w" style="left:0.00px;letter-spacing:-0.067px;">00:e0:ed:01:6e:bd/192.168.1.2/2719</span></span>
<span class="t" style="left:762.7px;top:349px;color:#424242;line-height:23px;height:23px;"><span class="w" style="left:0.00px;letter-spacing:-0.197px;">00:30:54:00:34:56/192.168.1.1/53</span></span>
<span class="t" style="left:1038.7px;top:349px;color:#424242;line-height:23px;height:23px;"><span class="w" style="left:0.00px;letter-spacing:0.087px;">mostlyUDP.pcap</span></span>
<span class="t" style="left:1173.7px;top:349px;color:#424242;line-height:23px;height:23px;"><span class="w" style="left:0.00px;transform:scale(0.9691);letter-spacing:-0.307px;">UDP</span></span>
<span class="t" style="left:1273.7px;top:349px;color:#424242;line-height:23px;height:23px;"><span class="w" style="left:0.00px;letter-spacing:-0.214px;">Source</span> <span class="w" style="left:49.27px;letter-spacing:0.499px;">Port:</span> <span class="w" style="left:86.47px;transform:scale(0.9929);letter-spacing:-0.219px;">2719,</span> <span class="w" style="left:125.68px;letter-spacing:0.216px;">Destination</span> <span class="w" style="left:206.11px;letter-spacing:0.499px;">Port:</span> <span class="w" style="left:243.31px;transform:scale(0.9929);letter-spacing:-0.243px;">53</span></span>
<div  style="left:287px;top:372px;width:1547px;height:23px;background:#ad7fa8"></div>
<span class="t" style="left:308.7px;top:372px;color:#424242;line-height:23px;height:23px;"><span class="w" style="left:0.00px;transform:scale(0.9927);letter-spacing:-0.213px;">05:33:54.840</span> <span class="w" style="left:87.43px;transform:scale(0.9925);letter-spacing:-0.243px;">520</span> <span class="w" style="left:114.57px;transform:scale(0.9925);letter-spacing:-0.243px;">000</span></span>
<span class="t" style="left:486.7px;top:372px;color:#424242;line-height:23px;height:23px;"><span class="w" style="left:0.00px;letter-spacing:-0.197px;">00:30:54:00:34:56/192.168.1.1/53</span></span>
<span class="t" style="left:762.7px;top:372px;color:#424242;line-height:23px;height:23px;"><span class="w" style="left:0.00px;letter-spacing:-0.067px;">00:e0:ed:01:6e:bd/192.168.1.2/2719</span></span>
<span class="t" style="left:1038.7px;top:372px;color:#424242;line-height:23px;height:23px;"><span class="w" style="left:0.00px;letter-spacing:0.087px;">mostlyUDP.pcap</span></span>
<span class="t" style="left:1173.7px;top:372px;color:#424242;line-height:23px;height:23px;"><span class="w" style="left:0.00px;transform:scale(0.9691);letter-spacing:-0.307px;">UDP</span></span>
<span class="t" style="left:1273.7px;top:372px;color:#424242;line-height:23px;height:23px;"><span class="w" style="left:0.00px;letter-spacing:-0.214px;">Source</span> <span class="w" style="left:49.27px;letter-spacing:0.499px;">Port:</span> <span class="w" style="left:86.47px;transform:scale(0.9929);letter-spacing:-0.203px;">53,</span> <span class="w" style="left:109.59px;letter-spacing:0.216px;">Destination</span> <span class="w" style="left:190.03px;letter-spacing:0.499px;">Port:</span> <span class="w" style="left:227.23px;transform:scale(0.9929);letter-spacing:-0.243px;">2719</span></span>
<div  style="left:287px;top:395px;width:1547px;height:23px;background:#729fcf"></div>
<span class="t" style="left:308.7px;top:395px;color:#424242;line-height:23px;height:23px;"><span class="w" style="left:0.00px;transform:scale(0.9927);letter-spacing:-0.213px;">05:33:54.878</span> <span class="w" style="left:87.43px;transform:scale(0.9925);letter-spacing:-0.243px;">338</span> <span class="w" style="left:114.57px;transform:scale(0.9925);letter-spacing:-0.243px;">000</span></span>
<span class="t" style="left:486.7px;top:395px;color:#424242;line-height:23px;height:23px;"><span class="w" style="left:0.00px;letter-spacing:-0.067px;">00:e0:ed:01:6e:bd/192.168.1.2/2720</span></span>
<span class="t" style="left:762.7px;top:395px;color:#424242;line-height:23px;height:23px;"><span class="w" style="left:0.00px;letter-spacing:-0.188px;">00:30:54:00:34:56/147.234.1.253/21</span></span>
<span class="t" style="left:1038.7px;top:395px;color:#424242;line-height:23px;height:23px;"><span class="w" style="left:0.00px;letter-spacing:0.087px;">mostlyUDP.pcap</span></span>
<span class="t" style="left:1173.7px;top:395px;color:#424242;line-height:23px;height:23px;"><span class="w" style="left:0.00px;transform:scale(0.9098);letter-spacing:-0.291px;">TCP</span></span>
<span class="t" style="left:1273.7px;top:395px;color:#424242;line-height:23px;height:23px;"><span class="w" style="left:0.00px;transform:scale(0.9987);letter-spacing:-0.243px;">2720</span> <span class="w" style="left:35.39px;transform:scale(0.9506);letter-spacing:-0.255px;">&gt;</span> <span class="w" style="left:46.52px;transform:scale(0.9987);letter-spacing:-0.243px;">21</span> <span class="w" style="left:65.73px;transform:scale(0.9569);letter-spacing:-0.228px;">[SYN]</span> <span class="w" style="left:105.17px;transform:scale(0.9901);letter-spacing:-0.247px;">Seq=2946351887</span> <span class="w" style="left:222.47px;transform:scale(0.9697);letter-spacing:-0.245px;">Len=28</span></span>
<div  style="left:287px;top:418px;width:1547px;height:23px;background:#729fcf"></div>
<span class="t" style="left:308.7px;top:418px;color:#424242;line-height:23px;height:23px;"><span class="w" style="left:0.00px;transform:scale(0.9927);letter-spacing:-0.213px;">05:33:54.896</span> <span class="w" style="left:87.43px;transform:scale(0.9925);letter-spacing:-0.243px;">583</span> <span class="w" style="left:114.57px;transform:scale(0.9925);letter-spacing:-0.243px;">000</span></span>
<span class="t" style="left:486.7px;top:418px;color:#424242;line-height:23px;height:23px;"><span class="w" style="left:0.00px;letter-spacing:-0.188px;">00:30:54:00:34:56/147.234.1.253/21</span></span>
<span class="t" style="left:762.7px;top:418px;color:#424242;line-height:23px;height:23px;"><span class="w" style="left:0.00px;letter-spacing:-0.067px;">00:e0:ed:01:6e:bd/192.168.1.2/2720</span></span>
<span class="t" style="left:1038.7px;top:418px;color:#424242;line-height:23px;height:23px;"><span class="w" style="left:0.00px;letter-spacing:0.087px;">mostlyUDP.pcap</span></span>
<span class="t" style="left:1173.7px;top:418px;color:#424242;line-height:23px;height:23px;"><span class="w" style="left:0.00px;transform:scale(0.9098);letter-spacing:-0.291px;">TCP</span></span>
<span class="t" style="left:1273.7px;top:418px;color:#424242;line-height:23px;height:23px;"><span class="w" style="left:0.00px;transform:scale(0.9970);letter-spacing:-0.243px;">21</span> <span class="w" style="left:19.18px;transform:scale(0.9491);letter-spacing:-0.255px;">&gt;</span> <span class="w" style="left:30.29px;transform:scale(0.9970);letter-spacing:-0.243px;">2720</span> <span class="w" style="left:65.62px;transform:scale(0.9288);letter-spacing:-0.228px;">[SYN,</span> <span class="w" style="left:103.99px;transform:scale(0.9800);letter-spacing:-0.255px;">ACK]</span> <span class="w" style="left:140.33px;transform:scale(0.9885);letter-spacing:-0.247px;">Seq=3844052228</span> <span class="w" style="left:257.45px;transform:scale(0.9938);letter-spacing:-0.244px;">Ack=2946351888</span> <span class="w" style="left:373.55px;transform:scale(0.9681);letter-spacing:-0.245px;">Len=28</span></span>
<div  style="left:287px;top:441px;width:1547px;height:27px;background:#729fcf"></div>
<span class="t" style="left:308.7px;top:441px;color:#424242;line-height:23px;height:23px;"><span class="w" style="left:0.00px;transform:scale(0.9927);letter-spacing:-0.213px;">05:33:54.896</span> <span class="w" style="left:87.43px;transform:scale(0.9925);letter-spacing:-0.243px;">665</span> <span class="w" style="left:114.57px;transform:scale(0.9925);letter-spacing:-0.243px;">000</span></span>
<span class="t" style="left:486.7px;top:441px;color:#424242;line-height:23px;height:23px;"><span class="w" style="left:0.00px;letter-spacing:-0.067px;">00:e0:ed:01:6e:bd/192.168.1.2/2720</span></span>
<span class="t" style="left:762.7px;top:441px;color:#424242;line-height:23px;height:23px;"><span class="w" style="left:0.00px;letter-spacing:-0.188px;">00:30:54:00:34:56/147.234.1.253/21</span></span>
<span class="t" style="left:1038.7px;top:441px;color:#424242;line-height:23px;height:23px;"><span class="w" style="left:0.00px;letter-spacing:0.087px;">mostlyUDP.pcap</span></span>
<span class="t" style="left:1173.7px;top:441px;color:#424242;line-height:23px;height:23px;"><span class="w" style="left:0.00px;transform:scale(0.9098);letter-spacing:-0.291px;">TCP</span></span>
<span class="t" style="left:1273.7px;top:441px;color:#424242;line-height:23px;height:23px;"><span class="w" style="left:0.00px;transform:scale(0.9935);letter-spacing:-0.243px;">2720</span> <span class="w" style="left:35.21px;transform:scale(0.9457);letter-spacing:-0.255px;">&gt;</span> <span class="w" style="left:46.28px;transform:scale(0.9935);letter-spacing:-0.243px;">21</span> <span class="w" style="left:65.39px;letter-spacing:-0.192px;">[ACK]</span> <span class="w" style="left:106.63px;transform:scale(0.9850);letter-spacing:-0.247px;">Seq=2946351888</span> <span class="w" style="left:223.33px;transform:scale(0.9903);letter-spacing:-0.244px;">Ack=3844052229</span> <span class="w" style="left:339.02px;transform:scale(0.9647);letter-spacing:-0.245px;">Len=20</span></span>
<div  style="left:464px;top:96px;width:1px;height:372px;background:repeating-linear-gradient(#000 0 1px,transparent 1px 2px)"></div>
<div  style="left:740px;top:96px;width:1px;height:372px;background:repeating-linear-gradient(#000 0 1px,transparent 1px 2px)"></div>
<div  style="left:1016px;top:96px;width:1px;height:372px;background:repeating-linear-gradient(#000 0 1px,transparent 1px 2px)"></div>
<div  style="left:1150px;top:96px;width:1px;height:372px;background:repeating-linear-gradient(#000 0 1px,transparent 1px 2px)"></div>
<div  style="left:1250px;top:96px;width:1px;height:372px;background:repeating-linear-gradient(#000 0 1px,transparent 1px 2px)"></div>
<div  style="left:1835px;top:71px;width:13px;height:396px;border:1px solid #b7aca1;border-radius:7px;background:linear-gradient(90deg,#e9e6e2,#e2ded9 60%,#d8d3cd)"></div>
<div  style="left:1835px;top:86px;width:13px;height:30px;border:1px solid #b7aca1;border-radius:7px;background:linear-gradient(90deg,#ffffff,#f4f2ef 55%,#e6e2de)"></div>
<div  style="left:1840px;top:98px;width:3px;height:1px;background:#b3aaa0"></div>
<div  style="left:1840px;top:101px;width:3px;height:1px;background:#b3aaa0"></div>
<div  style="left:1840px;top:104px;width:3px;height:1px;background:#b3aaa0"></div>
<div  style="left:1800px;top:49px;width:10px;height:4px;border:1px solid #000;background:#fff"></div>
<div  style="left:1826px;top:49px;width:10px;height:10px;border:1px solid #000;background:#fff"></div>
<div  style="left:1828px;top:51px;width:6px;height:1px;background:#000"></div>
<div  style="left:284px;top:476px;width:1568px;height:30px;background:#dfdfdf;border-radius:8px 8px 0 0"></div>
<div  style="left:290px;top:476px;width:1556px;height:1px;background:#e8e8e8"></div>
<div  style="left:284px;top:476px;width:122px;height:30px;background:#fff;border-radius:8px 9px 0 0"></div>
<svg style="left:290px;top:484px;" width="14" height="13" viewBox="0 0 14 13"><rect x="0.5" y="0.5" width="13" height="12" fill="#f8f9fc" stroke="#5d7096"/><rect x="1" y="1" width="12" height="2" fill="#7f90b2"/><path d="M1 1.6 H13" stroke="#a9b5cf" stroke-width="0.7"/><rect x="1" y="6" width="12" height="4" fill="#e4e7ef"/><path d="M4.5 3 V12 M1 4.5 H13 M1 6.5 H13 M1 8.5 H13 M1 10.5 H13" stroke="#b9c1d4" stroke-width="0.8"/><path d="M1 3 H13" stroke="#5d7096" stroke-width="1"/></svg>
<svg style="left:387px;top:485.3px;" width="12" height="12" viewBox="0 0 12 12"><path d="M1.6 1.6 H4 L6 3.7 L8 1.6 H10.4 V4 L8.3 6 L10.4 8 V10.4 H8 L6 8.3 L4 10.4 H1.6 V8 L3.7 6 L1.6 4 Z" fill="#fff" stroke="#000" stroke-width="1.25" stroke-linejoin="round"/></svg>
<div  style="left:411px;top:493px;width:1px;height:6px;background:#76a0cb"></div>
<div  style="left:413px;top:488px;width:1px;height:11px;background:#76a0cb"></div>
<div  style="left:415px;top:485px;width:1px;height:14px;background:#76a0cb"></div>
<div  style="left:417px;top:484px;width:1px;height:15px;background:#76a0cb"></div>
<div  style="left:419px;top:488px;width:1px;height:11px;background:#76a0cb"></div>
<div  style="left:421px;top:493px;width:1px;height:6px;background:#76a0cb"></div>
<div  style="left:423px;top:487px;width:1px;height:12px;background:#76a0cb"></div>
<div  style="left:425px;top:491px;width:1px;height:8px;background:#76a0cb"></div>
<svg style="left:512px;top:485px;" width="13" height="11" viewBox="0 0 13 11"><rect x="0" y="0" width="13" height="11" rx="0.5" fill="#b2b9cb"/><rect x="0.8" y="0.8" width="11.4" height="1.6" fill="#c6cbd9"/><rect x="1" y="3.1" width="3" height="1.1" fill="#fbfbfd"/><rect x="5" y="3.1" width="7" height="1.1" fill="#fbfbfd"/><rect x="1" y="5.1" width="3" height="1.1" fill="#fbfbfd"/><rect x="5" y="5.1" width="7" height="1.1" fill="#fbfbfd"/><rect x="1" y="7.1" width="3" height="1.1" fill="#fbfbfd"/><rect x="5" y="7.1" width="7" height="1.1" fill="#fbfbfd"/><rect x="1" y="9.1" width="3" height="1.1" fill="#fbfbfd"/><rect x="5" y="9.1" width="7" height="1.1" fill="#fbfbfd"/></svg>
<svg style="left:601px;top:482px;" width="19" height="18" viewBox="0 0 19 18"><rect x="0.8" y="0.8" width="11" height="16.5" fill="#f6f6f6" stroke="#cfc9d3" stroke-width="0.6"/><rect x="1" y="1" width="10.3" height="1.7" fill="#6fe66a"/><rect x="1" y="6" width="10.3" height="2.3" fill="#62f4f6"/><rect x="1" y="9" width="10.3" height="2.3" fill="#f26cf4"/><rect x="1" y="15" width="10.3" height="2.1" fill="#f3f05a"/><path d="M11.5 1.2 V17" stroke="#b9b9c3" stroke-width="0.8"/><path d="M16 2.2 L17.8 3.5 L17.3 10.5 L14 12.8 L11.8 9.6 Z" fill="#b9b3a4" stroke="#a9a393" stroke-width="0.5"/><path d="M8.8 9.2 L13.8 12.6 L11.5 15.2 L4.5 15.6 Z" fill="#f3e08a" stroke="#e3c85a" stroke-width="0.7" stroke-linejoin="round"/><path d="M8.6 10.6 L11.8 13.2 L6 14.9 Z" fill="#f7efc4"/></svg>
<span class="t" style="left:308.7px;top:480px;color:#000;line-height:23px;height:23px;"><span class="w" style="left:0.00px;letter-spacing:0.362px;">Properties</span></span>
<span class="t" style="left:430.2px;top:480px;color:#999999;line-height:23px;height:23px;"><span class="w" style="left:0.00px;letter-spacing:0.293px;">Histogram</span></span>
<span class="t" style="left:529.7px;top:480px;color:#999999;line-height:23px;height:23px;"><span class="w" style="left:0.00px;letter-spacing:0.348px;">Statistics</span></span>
<span class="t" style="left:621.7px;top:480px;color:#999999;line-height:23px;height:23px;"><span class="w" style="left:0.00px;letter-spacing:0.190px;">Colors</span></span>
<div class="hdr" style="left:287px;top:506px;width:1562px;height:28px;"></div>
<span class="t" style="left:290.7px;top:509px;color:#424242;line-height:23px;height:23px;"><span class="w" style="left:0.00px;letter-spacing:0.537px;">Property</span></span>
<span class="t" style="left:914.7px;top:509px;color:#424242;line-height:23px;height:23px;"><span class="w" style="left:0.00px;letter-spacing:0.347px;">Value</span></span>
<div  style="left:910px;top:506px;width:2px;height:27px;background:rgba(255,255,255,0.72)"></div>
<span class="t" style="left:320.7px;top:534px;color:#424242;line-height:23px;height:23px;"><span class="w" style="left:0.00px;letter-spacing:0.275px;">Timestamp</span></span>
<svg style="left:287.0px;top:539.8px;" width="10" height="12" viewBox="0 0 10 12"><path d="M1.3 1.3 L8.1 5.6 L1.3 9.9 Z" fill="#727272" stroke="#606060" stroke-width="0.5" stroke-linejoin="round"/></svg>
<span class="t" style="left:932.7px;top:534px;color:#424242;line-height:23px;height:23px;"><span class="w" style="left:0.00px;transform:scale(0.9949);letter-spacing:-0.213px;">05:33:10.576</span> <span class="w" style="left:87.63px;transform:scale(0.9947);letter-spacing:-0.243px;">043</span> <span class="w" style="left:114.83px;transform:scale(0.9947);letter-spacing:-0.243px;">000</span></span>
<div  style="left:287px;top:557px;width:1562px;height:23px;background:#f5f5f5"></div>
<span class="t" style="left:320.7px;top:557px;color:#424242;line-height:23px;height:23px;"><span class="w" style="left:0.00px;letter-spacing:-0.222px;">Source</span></span>
<span class="t" style="left:932.7px;top:557px;color:#424242;line-height:23px;height:23px;"><span class="w" style="left:0.00px;letter-spacing:0.395px;">linktype:ethernet</span></span>
<span class="t" style="left:320.7px;top:580px;color:#424242;line-height:23px;height:23px;"><span class="w" style="left:0.00px;letter-spacing:-0.033px;">Type</span></span>
<span class="t" style="left:932.7px;top:580px;color:#424242;line-height:23px;height:23px;"><span class="w" style="left:0.00px;letter-spacing:0.311px;">packet:udp</span></span>
<div  style="left:287px;top:603px;width:1562px;height:23px;background:#f5f5f5"></div>
<span class="t" style="left:320.7px;top:603px;color:#424242;line-height:23px;height:23px;"><span class="w" style="left:0.00px;letter-spacing:-0.080px;">Reference</span></span>
<span class="t" style="left:932.7px;top:603px;color:#424242;line-height:23px;height:23px;"><span class="w" style="left:0.00px;letter-spacing:0.087px;">mostlyUDP.pcap</span></span>
<span class="t" style="left:320.7px;top:626px;color:#424242;line-height:23px;height:23px;"><span class="w" style="left:0.00px;transform:scale(0.9919);letter-spacing:-0.220px;">Trace</span></span>
<span class="t" style="left:932.7px;top:626px;color:#424242;line-height:23px;height:23px;"><span class="w" style="left:0.00px;letter-spacing:0.087px;">mostlyUDP.pcap</span></span>
<div  style="left:287px;top:649px;width:1562px;height:23px;background:#f5f5f5"></div>
<span class="t" style="left:320.7px;top:649px;color:#424242;line-height:23px;height:23px;"><span class="w" style="left:0.00px;letter-spacing:0.265px;">Content</span></span>
<svg style="left:285.2px;top:656.5px;" width="12" height="10" viewBox="0 0 12 10"><path d="M1.9 1.3 L10.1 1.3 L6 8.2 Z" fill="#727272" stroke="#606060" stroke-width="0.5" stroke-linejoin="round"/></svg>
<span class="t" style="left:932.7px;top:649px;color:#424242;line-height:23px;height:23px;"><span class="w" style="left:0.00px;letter-spacing:-0.196px;">Source</span> <span class="w" style="left:49.38px;letter-spacing:0.515px;">Port:</span> <span class="w" style="left:86.67px;transform:scale(0.9952);letter-spacing:-0.213px;">137,</span> <span class="w" style="left:117.91px;letter-spacing:0.232px;">Destination</span> <span class="w" style="left:198.53px;letter-spacing:0.515px;">Port:</span> <span class="w" style="left:235.81px;transform:scale(0.9952);letter-spacing:-0.243px;">137</span></span>
<span class="t" style="left:332.7px;top:672px;color:#424242;line-height:23px;height:23px;"><span class="w" style="left:0.00px;letter-spacing:-0.048px;">Packet</span> <span class="w" style="left:48.61px;letter-spacing:0.188px;">Capture</span></span>
<svg style="left:298.8px;top:677.8px;" width="10" height="12" viewBox="0 0 10 12"><path d="M1.3 1.3 L8.1 5.6 L1.3 9.9 Z" fill="#727272" stroke="#606060" stroke-width="0.5" stroke-linejoin="round"/></svg>
<span class="t" style="left:932.7px;top:672px;color:#424242;line-height:23px;height:23px;"><span class="w" style="left:0.00px;">Frame</span> <span class="w" style="left:46.38px;transform:scale(0.9957);letter-spacing:-0.203px;">28:</span> <span class="w" style="left:69.57px;transform:scale(0.9957);letter-spacing:-0.243px;">92</span> <span class="w" style="left:88.73px;letter-spacing:0.088px;">bytes</span> <span class="w" style="left:128.05px;letter-spacing:0.227px;">on</span> <span class="w" style="left:148.22px;letter-spacing:0.320px;">wire,</span> <span class="w" style="left:184.51px;transform:scale(0.9957);letter-spacing:-0.243px;">92</span> <span class="w" style="left:203.67px;letter-spacing:0.088px;">bytes</span> <span class="w" style="left:243.00px;letter-spacing:0.391px;">captured</span></span>
<div  style="left:287px;top:695px;width:1562px;height:23px;background:#f5f5f5"></div>
<span class="t" style="left:332.7px;top:695px;color:#424242;line-height:23px;height:23px;"><span class="w" style="left:0.00px;letter-spacing:0.171px;">Ethernet</span> <span class="w" style="left:61.09px;transform:scale(0.9890);letter-spacing:-0.122px;">II</span></span>
<svg style="left:298.8px;top:700.8px;" width="10" height="12" viewBox="0 0 10 12"><path d="M1.3 1.3 L8.1 5.6 L1.3 9.9 Z" fill="#727272" stroke="#606060" stroke-width="0.5" stroke-linejoin="round"/></svg>
<span class="t" style="left:932.7px;top:695px;color:#424242;line-height:23px;height:23px;"><span class="w" style="left:0.00px;transform:scale(0.9725);letter-spacing:-0.194px;">Src:</span> <span class="w" style="left:28.21px;letter-spacing:-0.063px;">00:e0:ed:01:6e:bd</span> <span class="w" style="left:151.10px;transform:scale(0.9948);letter-spacing:-0.122px;">,</span> <span class="w" style="left:158.15px;letter-spacing:-0.120px;">Dst:</span> <span class="w" style="left:187.37px;letter-spacing:1.023px;">ff:ff:ff:ff:ff:ff</span></span>
<span class="t" style="left:332.7px;top:718px;color:#424242;line-height:23px;height:23px;"><span class="w" style="left:0.00px;letter-spacing:0.485px;">Internet</span> <span class="w" style="left:57.80px;letter-spacing:0.599px;">Protocol</span> <span class="w" style="left:120.66px;letter-spacing:-0.052px;">Version</span> <span class="w" style="left:173.39px;letter-spacing:-0.232px;">4</span></span>
<svg style="left:298.8px;top:723.8px;" width="10" height="12" viewBox="0 0 10 12"><path d="M1.3 1.3 L8.1 5.6 L1.3 9.9 Z" fill="#727272" stroke="#606060" stroke-width="0.5" stroke-linejoin="round"/></svg>
<span class="t" style="left:932.7px;top:718px;color:#424242;line-height:23px;height:23px;"><span class="w" style="left:0.00px;transform:scale(0.9737);letter-spacing:-0.194px;">Src:</span> <span class="w" style="left:28.24px;transform:scale(0.9962);letter-spacing:-0.210px;">192.168.1.2</span> <span class="w" style="left:107.91px;transform:scale(0.9960);letter-spacing:-0.122px;">,</span> <span class="w" style="left:114.97px;letter-spacing:-0.113px;">Dst:</span> <span class="w" style="left:144.22px;transform:scale(0.9961);letter-spacing:-0.215px;">192.168.1.255</span></span>
<div  style="left:287px;top:741px;width:1562px;height:23px;background:#f5f5f5"></div>
<span class="t" style="left:332.7px;top:741px;color:#424242;line-height:23px;height:23px;"><span class="w" style="left:0.00px;transform:scale(0.9865);letter-spacing:-0.231px;">User</span> <span class="w" style="left:33.37px;letter-spacing:0.236px;">Datagram</span> <span class="w" style="left:104.14px;letter-spacing:0.578px;">Protocol</span></span>
<svg style="left:296.7px;top:748.5px;" width="12" height="10" viewBox="0 0 12 10"><path d="M1.9 1.3 L10.1 1.3 L6 8.2 Z" fill="#727272" stroke="#606060" stroke-width="0.5" stroke-linejoin="round"/></svg>
<span class="t" style="left:932.7px;top:741px;color:#424242;line-height:23px;height:23px;"><span class="w" style="left:0.00px;transform:scale(0.9721);letter-spacing:-0.218px;">Src</span> <span class="w" style="left:24.27px;letter-spacing:0.539px;">Port:</span> <span class="w" style="left:61.69px;transform:scale(0.9987);letter-spacing:-0.213px;">137,</span> <span class="w" style="left:93.03px;letter-spacing:-0.084px;">Dst</span> <span class="w" style="left:118.31px;letter-spacing:0.539px;">Port:</span> <span class="w" style="left:155.73px;transform:scale(0.9987);letter-spacing:-0.243px;">137</span></span>
<span class="t" style="left:344.7px;top:764px;color:#424242;line-height:23px;height:23px;"><span class="w" style="left:0.00px;letter-spacing:-0.178px;">Source</span> <span class="w" style="left:49.50px;letter-spacing:0.697px;">Port</span></span>
<span class="t" style="left:932.7px;top:764px;color:#424242;line-height:23px;height:23px;"><span class="w" style="left:0.00px;transform:scale(0.9711);letter-spacing:-0.243px;">137</span></span>
<div  style="left:287px;top:787px;width:1562px;height:23px;background:#f5f5f5"></div>
<div class="sel" style="left:287px;top:787px;width:643px;height:23px;"></div>
<span class="t" style="left:344.7px;top:787px;color:#fff;line-height:23px;height:23px;"><span class="w" style="left:0.00px;letter-spacing:0.279px;">Destination</span> <span class="w" style="left:81.16px;letter-spacing:0.730px;">Port</span></span>
<div  style="left:934px;top:789px;width:26px;height:19px;background:#fff"></div>
<div  style="left:935px;top:790px;width:24px;height:17px;background:#ee7547"></div>
<span class="t" style="left:935.7px;top:787px;color:#fff;line-height:23px;height:23px;"><span class="w" style="left:0.00px;transform:scale(0.9464);letter-spacing:-0.243px;">137</span></span>
<span class="t" style="left:344.7px;top:810px;color:#424242;line-height:23px;height:23px;"><span class="w" style="left:0.00px;letter-spacing:0.152px;">Length</span></span>
<span class="t" style="left:932.7px;top:810px;color:#424242;line-height:23px;height:23px;"><span class="w" style="left:0.00px;letter-spacing:-0.111px;">58</span> <span class="w" style="left:19.55px;letter-spacing:0.238px;">bytes</span></span>
<div  style="left:287px;top:833px;width:1562px;height:23px;background:#f5f5f5"></div>
<span class="t" style="left:344.7px;top:833px;color:#424242;line-height:23px;height:23px;"><span class="w" style="left:0.00px;transform:scale(0.9913);letter-spacing:-0.258px;">Checksum</span></span>
<span class="t" style="left:932.7px;top:833px;color:#424242;line-height:23px;height:23px;"><span class="w" style="left:0.00px;letter-spacing:0.214px;">0x5bb1</span></span>
<span class="t" style="left:332.7px;top:856px;color:#424242;line-height:23px;height:23px;"><span class="w" style="left:0.00px;letter-spacing:-0.060px;">Payload</span></span>
<svg style="left:298.8px;top:861.8px;" width="10" height="12" viewBox="0 0 10 12"><path d="M1.3 1.3 L8.1 5.6 L1.3 9.9 Z" fill="#727272" stroke="#606060" stroke-width="0.5" stroke-linejoin="round"/></svg>
<span class="t" style="left:932.7px;top:856px;color:#424242;line-height:23px;height:23px;"><span class="w" style="left:0.00px;transform:scale(0.9769);letter-spacing:-0.213px;">Len:</span> <span class="w" style="left:30.78px;letter-spacing:-0.137px;">50</span> <span class="w" style="left:50.27px;letter-spacing:0.214px;">bytes</span></span>
<div  style="left:910px;top:534px;width:1px;height:345px;background:repeating-linear-gradient(#000 0 1px,transparent 1px 2px)"></div>
<svg style="left:1663px;top:483px;" width="18" height="16" viewBox="0 0 18 16"><defs><linearGradient id="pw" x1="0" y1="0" x2="1" y2="1"><stop offset="0" stop-color="#bfe3f8"/><stop offset="0.6" stop-color="#ffffff"/></linearGradient></defs><rect x="1.5" y="3.5" width="13" height="11" fill="url(#pw)" stroke="#a58f57"/><rect x="2" y="4" width="12" height="2" fill="#4a8fd6"/><path d="M9 9.5 L11.5 6.5" stroke="#444" stroke-width="1.2"/><path d="M10.5 4.5 L13.5 1 L17 3.8 L14.5 8 Z" fill="#3ea043" stroke="#2c7d31" stroke-width="0.8"/></svg>
<div  style="left:1686px;top:478px;width:24px;height:24px;background:#d5d1cd;border:1px solid #aaa29a;border-radius:4px"></div>
<svg style="left:1693px;top:486px;" width="13" height="12" viewBox="0 0 13 12"><path d="M2 3.5 V9.5 H5 M2 5.5 H5" stroke="#5578bc" fill="none"/><rect x="0.5" y="0.5" width="2.6" height="2.6" fill="#e9eefa" stroke="#5578bc"/><rect x="4.5" y="4.3" width="2.6" height="2.6" fill="#e9eefa" stroke="#5578bc"/><rect x="4.5" y="8.3" width="2.6" height="2.6" fill="#e9eefa" stroke="#5578bc"/><path d="M5 1.8 H12 M9 5.6 H12 M9 9.6 H12" stroke="#5578bc"/></svg>
<svg style="left:1715px;top:483px;" width="18" height="16" viewBox="0 0 18 16"><path d="M1 2.5 H7 M5 0.8 L7 2.5 L5 4.2 M9.5 0 V5" stroke="#3f7fb0" fill="none"/><path d="M1 12.5 H7 M5 10.8 L7 12.5 L5 14.2 M9.5 10 V15" stroke="#3f7fb0" fill="none"/><path d="M9.5 0 V5 M9.5 10 V15" stroke="#3b4f8a"/><path d="M5.5 6.3 H11.5 V4 L16.3 7.5 L11.5 11 V8.7 H5.5 Z" fill="#fdf3cf" stroke="#c98d13" stroke-linejoin="round"/></svg>
<svg style="left:1742px;top:483px;" width="17" height="16" viewBox="0 0 17 16"><rect x="1.5" y="0.5" width="12" height="12" fill="#f6f8fc" stroke="#5d6f9e"/><rect x="2" y="1" width="11" height="2.4" fill="#b3c0dc"/><path d="M2 5.5 H13 M2 8.5 H13 M5.5 3.5 V12" stroke="#c5cde0"/><path d="M7 10.2 L11 6.8 V8.8 Q15.5 8.6 15.6 13 Q15.6 14.5 14.6 15.4 Q15 11.8 11 11.8 V13.6 Z" fill="#fbd36f" stroke="#d8981c" stroke-width="0.9" stroke-linejoin="round"/></svg>
<svg style="left:1776px;top:485px;" width="12" height="7" viewBox="0 0 12 7"><path d="M1.3 0.6 H10.7 L6 5.2 Z" fill="#fff" stroke="#000" stroke-width="1"/></svg>
<div  style="left:1800px;top:486px;width:10px;height:4px;border:1px solid #000;background:#fff"></div>
<div  style="left:1826px;top:486px;width:10px;height:10px;border:1px solid #000;background:#fff"></div>
<div  style="left:1828px;top:488px;width:6px;height:1px;background:#000"></div>
<div  style="left:284px;top:898px;width:93px;height:30px;background:linear-gradient(#dde0ea 0px,#e6e8f0 6px,#f4f5f9 18px,#ffffff 100%);border-radius:8px 10px 0 0"></div>
<svg style="left:289px;top:907px;" width="16" height="15" viewBox="0 0 16 15"><path d="M1 3.5 H7 M1 7.5 H7 M1 11.5 H7" stroke="#5273b8" stroke-width="1" fill="none"/><path d="M5 2 L6.8 3.5 L5 5 M5 6 L6.8 7.5 L5 9 M5 10 L6.8 11.5 L5 13" stroke="#5273b8" stroke-width="0.9" fill="none"/><path d="M7.5 1 V14" stroke="#4a69aa" stroke-width="1.2"/><path d="M8 7.5 H14" stroke="#4a69aa" stroke-width="1"/><circle cx="14" cy="7.5" r="1.3" fill="#4a69aa"/></svg>
<svg style="left:358px;top:908.2px;" width="12" height="12" viewBox="0 0 12 12"><path d="M1.6 1.6 H4 L6 3.7 L8 1.6 H10.4 V4 L8.3 6 L10.4 8 V10.4 H8 L6 8.3 L4 10.4 H1.6 V8 L3.7 6 L1.6 4 Z" fill="#fff" stroke="#000" stroke-width="1.25" stroke-linejoin="round"/></svg>
<svg style="left:380px;top:905px;" width="18" height="18" viewBox="0 0 18 18"><path d="M1.5 1.5 L5.5 1.3 L8.8 2.4 V15.3 L1.5 13.9 Z" fill="#f4f9fc" stroke="#e3d2ad" stroke-width="0.8"/><path d="M1.3 13.3 L8.8 15 V15.9 L1.3 14.5 Z" fill="#a9b7c5"/><path d="M3.3 4.8 L6.6 5.6 M3.3 6.8 L6.6 7.8 M3.3 8.8 L6.6 9.6 M3.3 10.8 L5.5 11.3" stroke="#c3d2de" stroke-width="0.8"/><path d="M14 1.6 H16.3 V13.7 H14" fill="#f4f8fb" stroke="#a3b3c6" stroke-width="0.9"/><path d="M14.2 1.4 H15.8" stroke="#e3d2ad" stroke-width="0.8"/><path d="M9.2 1.5 L10.5 1.2 H13.8 V16.4 L11.5 13.8 L9.2 16.4 Z" fill="#b9dcfb" stroke="#7eafe4" stroke-width="0.9" stroke-linejoin="round"/></svg>
<svg style="left:490px;top:909px;" width="12" height="11" viewBox="0 0 12 11"><g opacity="0.45"><rect x="0" y="0" width="3" height="3" fill="#4c6aa8"/><rect x="0" y="4" width="3" height="3" fill="#4c6aa8"/><rect x="0" y="8" width="3" height="3" fill="#4c6aa8"/><rect x="0.9" y="0.9" width="1.2" height="1.2" fill="#dfe6f3"/><rect x="0.9" y="4.9" width="1.2" height="1.2" fill="#dfe6f3"/><rect x="0.9" y="8.9" width="1.2" height="1.2" fill="#dfe6f3"/><path d="M4.5 1.5 H12 M4.5 5.5 H12 M4.5 9.5 H12" stroke="#5d78b0" stroke-width="1"/></g></svg>
<span class="t" style="left:308.7px;top:903px;color:#000;line-height:23px;height:23px;"><span class="w" style="left:0.00px;letter-spacing:0.308px;">Filters</span></span>
<span class="t" style="left:400.7px;top:903px;color:#999999;line-height:23px;height:23px;"><span class="w" style="left:0.00px;letter-spacing:0.219px;">Bookmarks</span></span>
<span class="t" style="left:506.7px;top:903px;color:#999999;line-height:23px;height:23px;"><span class="w" style="left:0.00px;letter-spacing:0.379px;">Stream</span> <span class="w" style="left:53.73px;letter-spacing:0.106px;">List</span></span>
<span class="t" style="left:320.7px;top:931px;color:#000;line-height:23px;height:23px;"><span class="w" style="left:0.00px;transform:scale(0.9000);letter-spacing:-0.391px;">FILTER</span> <span class="w" style="left:46.42px;letter-spacing:0.265px;">stream</span> <span class="w" style="left:96.88px;letter-spacing:0.729px;">tcp</span> <span class="w" style="left:122.11px;letter-spacing:-0.179px;">00:00:01:00:00:00/145.254.160.237/3372</span> <span class="w" style="left:393.59px;transform:scale(0.9067);letter-spacing:-0.200px;">&lt;--&gt;</span> <span class="w" style="left:420.84px;letter-spacing:-0.008px;">fe:ff:20:00:01:00/65.208.228.223/80</span></span>
<svg style="left:285.2px;top:939px;" width="12" height="10" viewBox="0 0 12 10"><path d="M1.9 1.3 L10.1 1.3 L6 8.2 Z" fill="#727272" stroke="#606060" stroke-width="0.5" stroke-linejoin="round"/></svg>
<span class="t" style="left:332.7px;top:954px;color:#000;line-height:23px;height:23px;"><span class="w" style="left:0.00px;letter-spacing:-0.057px;">AND</span></span>
<svg style="left:296.7px;top:962px;" width="12" height="10" viewBox="0 0 12 10"><path d="M1.9 1.3 L10.1 1.3 L6 8.2 Z" fill="#727272" stroke="#606060" stroke-width="0.5" stroke-linejoin="round"/></svg>
<span class="t" style="left:344.7px;top:977px;color:#000;line-height:23px;height:23px;"><span class="w" style="left:0.00px;letter-spacing:-0.102px;">Transmission</span> <span class="w" style="left:90.46px;letter-spacing:0.497px;">Control</span> <span class="w" style="left:145.35px;letter-spacing:0.617px;">Protocol</span> <span class="w" style="left:208.37px;transform:scale(0.9454);letter-spacing:-0.278px;">CONTAINS</span></span>
<span class="t" style="left:344.7px;top:1000px;color:#000;line-height:23px;height:23px;"><span class="w" style="left:0.00px;transform:scale(0.9613);letter-spacing:-0.328px;">OR</span></span>
<svg style="left:308.2px;top:1008px;" width="12" height="10" viewBox="0 0 12 10"><path d="M1.9 1.3 L10.1 1.3 L6 8.2 Z" fill="#727272" stroke="#606060" stroke-width="0.5" stroke-linejoin="round"/></svg>
<span class="t" style="left:356.7px;top:1023px;color:#000;line-height:23px;height:23px;"><span class="w" style="left:0.00px;letter-spacing:-0.057px;">AND</span></span>
<svg style="left:319.7px;top:1031px;" width="12" height="10" viewBox="0 0 12 10"><path d="M1.9 1.3 L10.1 1.3 L6 8.2 Z" fill="#727272" stroke="#606060" stroke-width="0.5" stroke-linejoin="round"/></svg>
<div class="sel" style="left:287px;top:1046px;width:766px;height:23px;"></div>
<span class="t" style="left:368.7px;top:1046px;color:#fff;line-height:23px;height:23px;"><span class="w" style="left:0.00px;letter-spacing:0.068px;">:packetsource:</span> <span class="w" style="left:101.56px;transform:scale(0.9446);letter-spacing:-0.278px;">CONTAINS</span> <span class="w" style="left:174.68px;letter-spacing:-0.090px;">"00:00:01:00:00:00/145.254.160.237/3372"</span></span>
<span class="t" style="left:368.7px;top:1069px;color:#000;line-height:23px;height:23px;"><span class="w" style="left:0.00px;letter-spacing:0.311px;">:packetdestination:</span> <span class="w" style="left:134.05px;transform:scale(0.9446);letter-spacing:-0.278px;">CONTAINS</span> <span class="w" style="left:207.17px;letter-spacing:0.074px;">"fe:ff:20:00:01:00/65.208.228.223/80"</span></span>
<span class="t" style="left:356.7px;top:1092px;color:#000;line-height:23px;height:23px;"><span class="w" style="left:0.00px;letter-spacing:-0.057px;">AND</span></span>
<svg style="left:319.7px;top:1100px;" width="12" height="10" viewBox="0 0 12 10"><path d="M1.9 1.3 L10.1 1.3 L6 8.2 Z" fill="#727272" stroke="#606060" stroke-width="0.5" stroke-linejoin="round"/></svg>
<div  style="left:1053px;top:931px;width:13px;height:189px;border:1px solid #b7aca1;border-radius:7px;background:linear-gradient(90deg,#e9e6e2,#e2ded9 60%,#d8d3cd)"></div>
<div  style="left:1053px;top:931px;width:13px;height:155px;border:1px solid #b7aca1;border-radius:7px;background:linear-gradient(90deg,#ffffff,#f4f2ef 55%,#e6e2de)"></div>
<div  style="left:1058px;top:1005px;width:3px;height:1px;background:#b3aaa0"></div>
<div  style="left:1058px;top:1008px;width:3px;height:1px;background:#b3aaa0"></div>
<div  style="left:1058px;top:1011px;width:3px;height:1px;background:#b3aaa0"></div>
<span class="t" style="left:1074.2px;top:935px;color:#424242;line-height:23px;height:23px;"><span class="w" style="left:0.00px;letter-spacing:0.492px;">not:</span></span>
<span class="t" style="left:1074.2px;top:966px;color:#424242;line-height:23px;height:23px;"><span class="w" style="left:0.00px;letter-spacing:0.385px;">field:</span></span>
<span class="t" style="left:1074.2px;top:998px;color:#424242;line-height:23px;height:23px;"><span class="w" style="left:0.00px;letter-spacing:-0.172px;">value:</span></span>
<div  style="left:1122px;top:940px;width:14px;height:14px;border:1px solid #b3a99e;border-radius:3px;background:linear-gradient(#ffffff,#f3f1ef)"></div>
<div  style="left:1121px;top:1031px;width:14px;height:14px;border:1px solid #b3a99e;border-radius:3px;background:linear-gradient(#ffffff,#f3f1ef)"></div>
<span class="t" style="left:1140.7px;top:1026px;color:#424242;line-height:23px;height:23px;"><span class="w" style="left:0.00px;letter-spacing:0.359px;">ignore</span> <span class="w" style="left:46.92px;transform:scale(0.9615);letter-spacing:-0.231px;">case</span></span>
<div  style="left:1118px;top:963px;width:726px;height:29px;background:#f3f3f3"></div>
<div  style="left:1120px;top:965px;width:722px;height:25px;border:1px solid #b3a99e;border-radius:4px;background:linear-gradient(#f5f6f6,#fdfdfd)"></div>
<div  style="left:1817px;top:966px;width:24px;height:23px;border-radius:0 3px 3px 0;background:linear-gradient(#fdfdfc,#efece8)"></div>
<div  style="left:1816px;top:966px;width:1px;height:23px;background:#c2b8ae"></div>
<svg style="left:1824px;top:976px;" width="9" height="6" viewBox="0 0 9 6"><path d="M0.4 0.2 L8.4 0.2 L4.4 5.2 Z" fill="#555"/></svg>
<span class="t" style="left:1124.7px;top:966px;color:#424242;line-height:23px;height:23px;"><span class="w" style="left:0.00px;letter-spacing:0.138px;">:packetsource:</span></span>
<div  style="left:1117px;top:996px;width:727px;height:26px;background:#f7f6f5"></div>
<div  style="left:1119px;top:998px;width:724px;height:23px;border:1px solid #b3a99e;border-top-color:#a89d92;border-radius:4px;background:linear-gradient(#f1f3f3 0,#fbfbfb 50%,#ffffff 100%)"></div>
<span class="t" style="left:1123.7px;top:998px;color:#424242;line-height:23px;height:23px;"><span class="w" style="left:0.00px;letter-spacing:-0.191px;">00:00:01:00:00:00/145.254.160.237/3372</span></span>
<svg style="left:1585px;top:905px;" width="13" height="13" viewBox="0 0 13 13"><g transform="translate(0.5,0.5)"><path d="M1 0.5 H10 Q11 0.5 11 1.5 V10.5 H0.5 V1 Z" fill="#dfe7f6" stroke="#5f7ec2"/><rect x="2.5" y="0.8" width="6.5" height="4" fill="#fff" stroke="#c9d2e6" stroke-width="0.6"/><rect x="2.5" y="3.6" width="6.5" height="1.3" fill="#f5cf83"/><rect x="3" y="7" width="5.5" height="3.5" fill="#f3f6fb" stroke="#8ea3d0" stroke-width="0.8"/><rect x="6" y="7.8" width="1.4" height="2" fill="#6d86c0"/></g></svg>
<div  style="left:1607px;top:904px;width:1px;height:14px;background:#ddd5ce"></div>
<div  style="left:1663px;top:904px;width:1px;height:14px;background:#ddd5ce"></div>
<div  style="left:1741px;top:904px;width:1px;height:14px;background:#ddd5ce"></div>
<svg style="left:1619px;top:905px;" width="13" height="12" viewBox="0 0 13 12"><path d="M2 3 L3.8 1.2 L6.3 3.9 L8.8 1.2 L10.8 3 L8.2 5.9 L10.8 8.8 L8.8 10.6 L6.3 7.9 L3.8 10.6 L2 8.8 L4.5 5.9 Z" fill="#e8383f" stroke="#d8474d" stroke-width="0.7" stroke-linejoin="round"/></svg>
<svg style="left:1640px;top:904px;" width="14" height="14" viewBox="0 0 14 14"><path d="M5.3 1.6 H8.7 V5.3 H12.4 V8.7 H8.7 V12.4 H5.3 V8.7 H1.6 V5.3 H5.3 Z" fill="#9bd13c" stroke="#2f8a2f" stroke-width="1.1" stroke-linejoin="round"/><path d="M6.2 2.6 H7.8 V6.2 H11.4 M2.6 6.2 H6.2" stroke="#d5ef8e" stroke-width="0.8" fill="none"/></svg>
<svg style="left:1675px;top:905px;" width="13" height="13" viewBox="0 0 13 13"><path d="M10.8 0.8 L4.8 8 M4 4.5 L8.2 7.2" stroke="#4f6fb0" stroke-width="1.3" fill="none"/><circle cx="2.3" cy="6.3" r="1.6" fill="#fff" stroke="#7fa5dc" stroke-width="0.9"/><circle cx="6" cy="10.6" r="1.6" fill="#fff" stroke="#7fa5dc" stroke-width="0.9"/></svg>
<svg style="left:1697px;top:905px;opacity:0.8" width="13" height="13" viewBox="0 0 13 13"><rect x="0.7" y="0.7" width="7" height="9.5" fill="#eef3fa" stroke="#c5ad80" stroke-width="0.8"/><path d="M3.5 2.7 H8.5 L11 5.2 V12 H3.5 Z" fill="#f2f6fc" stroke="#c5ad80" stroke-width="0.8"/><path d="M5 5.5 H9.3 M5 7.5 H9.3 M5 9.5 H9.3 M1.8 3 V9" stroke="#7f9fd2" stroke-width="0.9"/></svg>
<svg style="left:1719px;top:905px;opacity:0.8" width="13" height="13" viewBox="0 0 13 13"><rect x="1" y="1.5" width="9.5" height="10.5" rx="1" fill="#eec27d" stroke="#c9a468" stroke-width="0.8"/><rect x="3.7" y="0.3" width="4" height="2.4" rx="0.8" fill="#9aa8c4" stroke="#7b8bb0" stroke-width="0.6"/><path d="M5 4.5 H9 L11.3 6.8 V12 H5 Z" fill="#f2f5fa" stroke="#b9bfd0" stroke-width="0.7"/><path d="M6.3 7.5 H9.5 M6.3 9.5 H9.5" stroke="#9fb5dc" stroke-width="0.8"/></svg>
<svg style="left:1751px;top:905px;" width="15" height="13" viewBox="0 0 15 13"><g transform="translate(3,0.5)"><path d="M1 0.5 H10 Q11 0.5 11 1.5 V10.5 H0.5 V1 Z" fill="#dfe7f6" stroke="#5f7ec2"/><rect x="2.5" y="0.8" width="6.5" height="4" fill="#fff" stroke="#c9d2e6" stroke-width="0.6"/><rect x="2.5" y="3.6" width="6.5" height="1.3" fill="#f5cf83"/><rect x="3" y="7" width="5.5" height="3.5" fill="#f3f6fb" stroke="#8ea3d0" stroke-width="0.8"/><rect x="6" y="7.8" width="1.4" height="2" fill="#6d86c0"/></g><path d="M0.5 7.5 H5 V12 Z" fill="#000"/></svg>
<svg style="left:1775px;top:905px;" width="14" height="13" viewBox="0 0 14 13"><g transform="translate(0.5,0.5)"><path d="M1 0.5 H10 Q11 0.5 11 1.5 V10.5 H0.5 V1 Z" fill="#dfe7f6" stroke="#5f7ec2"/><rect x="2.5" y="0.8" width="6.5" height="4" fill="#fff" stroke="#c9d2e6" stroke-width="0.6"/><rect x="2.5" y="3.6" width="6.5" height="1.3" fill="#f5cf83"/><rect x="3" y="7" width="5.5" height="3.5" fill="#f3f6fb" stroke="#8ea3d0" stroke-width="0.8"/><rect x="6" y="7.8" width="1.4" height="2" fill="#6d86c0"/></g><path d="M13 7 V12 H8 Z" fill="#000"/></svg>
<div  style="left:1800px;top:909px;width:10px;height:4px;border:1px solid #000;background:#fff"></div>
<div  style="left:1826px;top:909px;width:10px;height:10px;border:1px solid #000;background:#fff"></div>
<div  style="left:1828px;top:911px;width:6px;height:1px;background:#000"></div>
</body></html>
